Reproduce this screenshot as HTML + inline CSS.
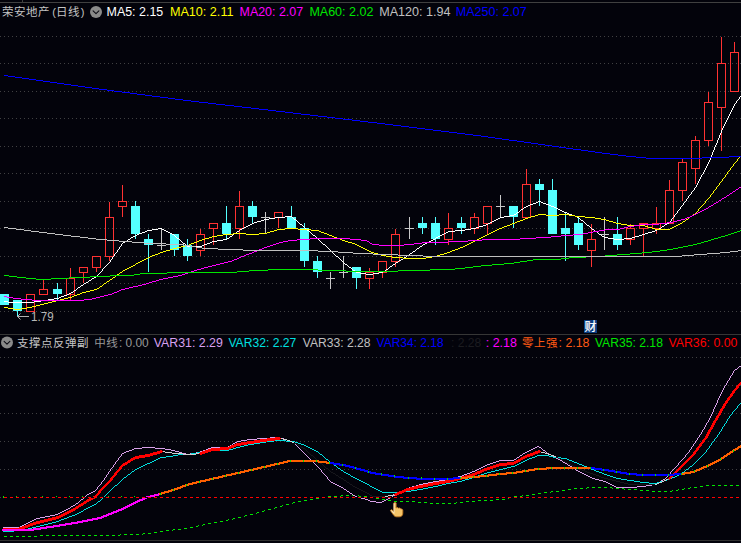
<!DOCTYPE html>
<html lang="zh-CN"><head><meta charset="utf-8"><title>荣安地产(日线)</title>
<style>html,body{margin:0;padding:0;background:#03030b;overflow:hidden}svg{display:block}text{font-family:"Liberation Sans","Noto Sans CJK SC",sans-serif;font-size:12.5px}.cj{font-size:11.5px;letter-spacing:0.5px}</style></head><body>
<svg width="741" height="543" viewBox="0 0 741 543">
<rect x="0" y="0" width="741" height="543" fill="#03030b"/>
<g shape-rendering="crispEdges">
<rect x="0" y="2" width="741" height="1" fill="#404040"/>
<rect x="22" y="0" width="1" height="2" fill="#404040"/>
<rect x="0" y="334" width="741" height="1" fill="#363636"/>
<rect x="0" y="540" width="741" height="1" fill="#303030"/>
<line x1="0" y1="36.5" x2="741" y2="36.5" stroke="#404042" stroke-width="1" stroke-dasharray="1 3"/>
<line x1="0" y1="63.5" x2="741" y2="63.5" stroke="#404042" stroke-width="1" stroke-dasharray="1 3"/>
<line x1="0" y1="91.5" x2="741" y2="91.5" stroke="#404042" stroke-width="1" stroke-dasharray="1 3"/>
<line x1="0" y1="118.5" x2="741" y2="118.5" stroke="#404042" stroke-width="1" stroke-dasharray="1 3"/>
<line x1="0" y1="146.5" x2="741" y2="146.5" stroke="#404042" stroke-width="1" stroke-dasharray="1 3"/>
<line x1="0" y1="173.5" x2="741" y2="173.5" stroke="#404042" stroke-width="1" stroke-dasharray="1 3"/>
<line x1="0" y1="201.5" x2="741" y2="201.5" stroke="#404042" stroke-width="1" stroke-dasharray="1 3"/>
<line x1="0" y1="228.5" x2="741" y2="228.5" stroke="#404042" stroke-width="1" stroke-dasharray="1 3"/>
<line x1="0" y1="256.5" x2="741" y2="256.5" stroke="#404042" stroke-width="1" stroke-dasharray="1 3"/>
<line x1="0" y1="283.5" x2="741" y2="283.5" stroke="#404042" stroke-width="1" stroke-dasharray="1 3"/>
<line x1="0" y1="311.5" x2="741" y2="311.5" stroke="#404042" stroke-width="1" stroke-dasharray="1 3"/>
<line x1="0" y1="357.5" x2="741" y2="357.5" stroke="#404042" stroke-width="1" stroke-dasharray="1 3"/>
<line x1="0" y1="385.5" x2="741" y2="385.5" stroke="#404042" stroke-width="1" stroke-dasharray="1 3"/>
<line x1="0" y1="413.5" x2="741" y2="413.5" stroke="#404042" stroke-width="1" stroke-dasharray="1 3"/>
<line x1="0" y1="441.5" x2="741" y2="441.5" stroke="#404042" stroke-width="1" stroke-dasharray="1 3"/>
<line x1="0" y1="469.5" x2="741" y2="469.5" stroke="#404042" stroke-width="1" stroke-dasharray="1 3"/>
<line x1="0" y1="497.5" x2="741" y2="497.5" stroke="#404042" stroke-width="1" stroke-dasharray="1 3"/>
<rect x="4" y="294" width="1" height="11" fill="#54ffff"/>
<rect x="0" y="294" width="9" height="11" fill="#54ffff"/>
<rect x="17" y="300" width="1" height="16" fill="#54ffff"/>
<rect x="13" y="300" width="9" height="11" fill="#54ffff"/>
<rect x="26.5" y="294.5" width="8" height="17" fill="none" stroke="#ff3232" stroke-width="1"/>
<rect x="43" y="279" width="1" height="10" fill="#ff3232"/>
<rect x="39.5" y="289.5" width="8" height="5" fill="none" stroke="#ff3232" stroke-width="1"/>
<rect x="57" y="283" width="1" height="17" fill="#54ffff"/>
<rect x="53" y="289" width="9" height="5" fill="#54ffff"/>
<rect x="70" y="268" width="1" height="10" fill="#ff3232"/>
<rect x="70" y="295" width="1" height="5" fill="#ff3232"/>
<rect x="66.5" y="278.5" width="8" height="16" fill="none" stroke="#ff3232" stroke-width="1"/>
<rect x="83" y="273" width="1" height="10" fill="#ff3232"/>
<rect x="79.5" y="267.5" width="8" height="5" fill="none" stroke="#ff3232" stroke-width="1"/>
<rect x="96" y="268" width="1" height="4" fill="#ff3232"/>
<rect x="92.5" y="256.5" width="8" height="11" fill="none" stroke="#ff3232" stroke-width="1"/>
<rect x="109" y="202" width="1" height="15" fill="#ff3232"/>
<rect x="109" y="257" width="1" height="4" fill="#ff3232"/>
<rect x="105.5" y="217.5" width="8" height="39" fill="none" stroke="#ff3232" stroke-width="1"/>
<rect x="122" y="185" width="1" height="16" fill="#ff3232"/>
<rect x="122" y="207" width="1" height="10" fill="#ff3232"/>
<rect x="118.5" y="201.5" width="8" height="5" fill="none" stroke="#ff3232" stroke-width="1"/>
<rect x="135" y="201" width="1" height="38" fill="#54ffff"/>
<rect x="131" y="206" width="9" height="28" fill="#54ffff"/>
<rect x="148" y="234" width="1" height="38" fill="#54ffff"/>
<rect x="144" y="239" width="9" height="6" fill="#54ffff"/>
<rect x="161" y="228" width="1" height="22" fill="#c8c8c8"/>
<rect x="157" y="245" width="9" height="1" fill="#c8c8c8"/>
<rect x="174" y="234" width="1" height="22" fill="#54ffff"/>
<rect x="170" y="234" width="9" height="16" fill="#54ffff"/>
<rect x="187" y="239" width="1" height="22" fill="#54ffff"/>
<rect x="183" y="245" width="9" height="11" fill="#54ffff"/>
<rect x="200" y="229" width="1" height="5" fill="#ff3232"/>
<rect x="200" y="251" width="1" height="5" fill="#ff3232"/>
<rect x="196.5" y="234.5" width="8" height="16" fill="none" stroke="#ff3232" stroke-width="1"/>
<rect x="213" y="229" width="1" height="16" fill="#ff3232"/>
<rect x="209.5" y="223.5" width="8" height="5" fill="none" stroke="#ff3232" stroke-width="1"/>
<rect x="226" y="206" width="1" height="33" fill="#54ffff"/>
<rect x="222" y="223" width="9" height="11" fill="#54ffff"/>
<rect x="239" y="191" width="1" height="15" fill="#ff3232"/>
<rect x="239" y="229" width="1" height="10" fill="#ff3232"/>
<rect x="235.5" y="206.5" width="8" height="22" fill="none" stroke="#ff3232" stroke-width="1"/>
<rect x="252" y="201" width="1" height="22" fill="#54ffff"/>
<rect x="248" y="206" width="9" height="11" fill="#54ffff"/>
<rect x="265" y="212" width="1" height="22" fill="#c8c8c8"/>
<rect x="261" y="217" width="9" height="1" fill="#c8c8c8"/>
<rect x="278" y="218" width="1" height="10" fill="#ff3232"/>
<rect x="274.5" y="212.5" width="8" height="5" fill="none" stroke="#ff3232" stroke-width="1"/>
<rect x="291" y="206" width="1" height="22" fill="#54ffff"/>
<rect x="287" y="217" width="9" height="11" fill="#54ffff"/>
<rect x="304" y="223" width="1" height="44" fill="#54ffff"/>
<rect x="300" y="228" width="9" height="33" fill="#54ffff"/>
<rect x="317" y="256" width="1" height="22" fill="#54ffff"/>
<rect x="313" y="261" width="9" height="11" fill="#54ffff"/>
<rect x="330" y="272" width="1" height="17" fill="#c8c8c8"/>
<rect x="326" y="278" width="9" height="1" fill="#c8c8c8"/>
<rect x="343" y="256" width="1" height="22" fill="#c8c8c8"/>
<rect x="339" y="272" width="9" height="1" fill="#c8c8c8"/>
<rect x="356" y="267" width="1" height="22" fill="#54ffff"/>
<rect x="352" y="267" width="9" height="11" fill="#54ffff"/>
<rect x="369" y="268" width="1" height="4" fill="#ff3232"/>
<rect x="369" y="279" width="1" height="10" fill="#ff3232"/>
<rect x="365.5" y="272.5" width="8" height="6" fill="none" stroke="#ff3232" stroke-width="1"/>
<rect x="382" y="273" width="1" height="5" fill="#ff3232"/>
<rect x="378.5" y="261.5" width="8" height="11" fill="none" stroke="#ff3232" stroke-width="1"/>
<rect x="395" y="229" width="1" height="5" fill="#ff3232"/>
<rect x="395" y="262" width="1" height="5" fill="#ff3232"/>
<rect x="391.5" y="234.5" width="8" height="27" fill="none" stroke="#ff3232" stroke-width="1"/>
<rect x="409" y="217" width="1" height="22" fill="#c8c8c8"/>
<rect x="405" y="228" width="9" height="1" fill="#c8c8c8"/>
<rect x="422" y="217" width="1" height="17" fill="#54ffff"/>
<rect x="418" y="223" width="9" height="5" fill="#54ffff"/>
<rect x="435" y="217" width="1" height="28" fill="#54ffff"/>
<rect x="431" y="223" width="9" height="16" fill="#54ffff"/>
<rect x="448" y="213" width="1" height="15" fill="#ff3232"/>
<rect x="448" y="240" width="1" height="5" fill="#ff3232"/>
<rect x="444.5" y="228.5" width="8" height="11" fill="none" stroke="#ff3232" stroke-width="1"/>
<rect x="461" y="217" width="1" height="17" fill="#54ffff"/>
<rect x="457" y="223" width="9" height="5" fill="#54ffff"/>
<rect x="474" y="213" width="1" height="4" fill="#ff3232"/>
<rect x="474" y="229" width="1" height="5" fill="#ff3232"/>
<rect x="470.5" y="217.5" width="8" height="11" fill="none" stroke="#ff3232" stroke-width="1"/>
<rect x="487" y="224" width="1" height="10" fill="#ff3232"/>
<rect x="483.5" y="206.5" width="8" height="17" fill="none" stroke="#ff3232" stroke-width="1"/>
<rect x="500" y="195" width="1" height="22" fill="#c8c8c8"/>
<rect x="496" y="206" width="9" height="1" fill="#c8c8c8"/>
<rect x="513" y="206" width="1" height="22" fill="#54ffff"/>
<rect x="509" y="206" width="9" height="11" fill="#54ffff"/>
<rect x="526" y="169" width="1" height="15" fill="#ff3232"/>
<rect x="522.5" y="184.5" width="8" height="33" fill="none" stroke="#ff3232" stroke-width="1"/>
<rect x="539" y="179" width="1" height="27" fill="#54ffff"/>
<rect x="535" y="184" width="9" height="6" fill="#54ffff"/>
<rect x="552" y="179" width="1" height="55" fill="#54ffff"/>
<rect x="548" y="190" width="9" height="44" fill="#54ffff"/>
<rect x="565" y="212" width="1" height="49" fill="#54ffff"/>
<rect x="561" y="228" width="9" height="6" fill="#54ffff"/>
<rect x="578" y="217" width="1" height="33" fill="#54ffff"/>
<rect x="574" y="223" width="9" height="22" fill="#54ffff"/>
<rect x="591" y="224" width="1" height="15" fill="#ff3232"/>
<rect x="591" y="251" width="1" height="16" fill="#ff3232"/>
<rect x="587.5" y="239.5" width="8" height="11" fill="none" stroke="#ff3232" stroke-width="1"/>
<rect x="604" y="217" width="1" height="33" fill="#c8c8c8"/>
<rect x="600" y="234" width="9" height="1" fill="#c8c8c8"/>
<rect x="617" y="217" width="1" height="33" fill="#54ffff"/>
<rect x="613" y="234" width="9" height="11" fill="#54ffff"/>
<rect x="630" y="224" width="1" height="4" fill="#ff3232"/>
<rect x="630" y="240" width="1" height="5" fill="#ff3232"/>
<rect x="626.5" y="228.5" width="8" height="11" fill="none" stroke="#ff3232" stroke-width="1"/>
<rect x="643" y="229" width="1" height="27" fill="#ff3232"/>
<rect x="639.5" y="223.5" width="8" height="5" fill="none" stroke="#ff3232" stroke-width="1"/>
<rect x="656" y="207" width="1" height="16" fill="#ff3232"/>
<rect x="656" y="229" width="1" height="5" fill="#ff3232"/>
<rect x="652.5" y="223.5" width="8" height="5" fill="none" stroke="#ff3232" stroke-width="1"/>
<rect x="669" y="180" width="1" height="10" fill="#ff3232"/>
<rect x="665.5" y="190.5" width="8" height="33" fill="none" stroke="#ff3232" stroke-width="1"/>
<rect x="682" y="158" width="1" height="4" fill="#ff3232"/>
<rect x="682" y="191" width="1" height="10" fill="#ff3232"/>
<rect x="678.5" y="162.5" width="8" height="28" fill="none" stroke="#ff3232" stroke-width="1"/>
<rect x="695" y="136" width="1" height="4" fill="#ff3232"/>
<rect x="695" y="169" width="1" height="15" fill="#ff3232"/>
<rect x="691.5" y="140.5" width="8" height="28" fill="none" stroke="#ff3232" stroke-width="1"/>
<rect x="708" y="92" width="1" height="10" fill="#ff3232"/>
<rect x="708" y="141" width="1" height="5" fill="#ff3232"/>
<rect x="704.5" y="102.5" width="8" height="38" fill="none" stroke="#ff3232" stroke-width="1"/>
<rect x="721" y="37" width="1" height="26" fill="#ff3232"/>
<rect x="721" y="108" width="1" height="43" fill="#ff3232"/>
<rect x="717.5" y="63.5" width="8" height="44" fill="none" stroke="#ff3232" stroke-width="1"/>
<rect x="734" y="42" width="1" height="10" fill="#ff3232"/>
<rect x="730.5" y="52.5" width="8" height="39" fill="none" stroke="#ff3232" stroke-width="1"/>
<path d="M4 301h4v1h-4zM8 302h26v1h-26zM34 301h7v1h-7zM41 300h7v1h-7zM48 299h6v1h-6zM54 298h5v1h-5zM59 297h2v1h-2zM61 296h3v1h-3zM64 295h3v1h-3zM67 294h2v1h-2zM69 293h2v1h-2zM71 292h2v1h-2zM73 291h1v1h-1zM74 290h2v1h-2zM76 289h1v1h-1zM77 288h1v1h-1zM78 287h2v1h-2zM80 286h1v1h-1zM81 285h2v1h-2zM83 284h1v1h-1zM84 283h2v1h-2zM86 282h2v1h-2zM88 281h1v1h-1zM89 280h2v1h-2zM91 279h1v1h-1zM92 278h2v1h-2zM94 277h2v1h-2zM96 276h1v1h-1zM97 275h1v1h-1zM98 274h1v1h-1zM99 273h1v1h-1zM100 272h1v1h-1zM101 271h1v1h-1zM102 269h1v2h-1zM103 268h1v1h-1zM104 267h1v1h-1zM105 266h1v1h-1zM106 265h1v1h-1zM107 264h1v1h-1zM108 263h1v1h-1zM109 262h1v1h-1zM110 260h1v2h-1zM111 259h1v1h-1zM112 257h1v2h-1zM113 256h1v1h-1zM114 254h1v2h-1zM115 253h1v1h-1zM116 252h1v1h-1zM117 250h1v2h-1zM118 249h1v1h-1zM119 247h1v2h-1zM120 246h1v1h-1zM121 244h1v2h-1zM122 243h1v1h-1zM123 242h2v1h-2zM125 241h2v1h-2zM127 240h1v1h-1zM128 239h2v1h-2zM130 238h1v1h-1zM131 237h2v1h-2zM133 236h2v1h-2zM135 235h2v1h-2zM137 234h2v1h-2zM139 233h3v1h-3zM142 232h3v1h-3zM145 231h2v1h-2zM147 230h5v1h-5zM152 229h6v1h-6zM158 228h4v1h-4zM162 229h2v1h-2zM164 230h2v1h-2zM166 231h2v1h-2zM168 232h2v1h-2zM170 233h2v1h-2zM172 234h2v1h-2zM174 235h1v1h-1zM175 236h1v1h-1zM176 237h1v1h-1zM177 238h2v1h-2zM179 239h1v1h-1zM180 240h1v1h-1zM181 241h1v1h-1zM182 242h1v1h-1zM183 243h2v1h-2zM185 244h1v1h-1zM186 245h1v1h-1zM187 246h15v1h-15zM202 245h2v1h-2zM204 244h3v1h-3zM207 243h3v1h-3zM210 242h2v1h-2zM212 241h5v1h-5zM217 240h6v1h-6zM223 239h4v1h-4zM227 238h2v1h-2zM229 237h1v1h-1zM230 236h2v1h-2zM232 235h1v1h-1zM233 234h1v1h-1zM234 233h2v1h-2zM236 232h1v1h-1zM237 231h2v1h-2zM239 230h1v1h-1zM240 229h2v1h-2zM242 228h2v1h-2zM244 227h2v1h-2zM246 226h2v1h-2zM248 225h2v1h-2zM250 224h2v1h-2zM252 223h2v1h-2zM254 222h3v1h-3zM257 221h4v1h-4zM261 220h3v1h-3zM264 219h5v1h-5zM269 218h6v1h-6zM275 217h10v1h-10zM285 216h7v1h-7zM292 217h1v1h-1zM293 218h1v1h-1zM294 219h2v1h-2zM296 220h1v1h-1zM297 221h1v1h-1zM298 222h1v1h-1zM299 223h1v1h-1zM300 224h2v1h-2zM302 225h1v1h-1zM303 226h1v1h-1zM304 227h1v1h-1zM305 228h1v1h-1zM306 229h1v1h-1zM307 230h2v1h-2zM309 231h1v1h-1zM310 232h1v1h-1zM311 233h1v1h-1zM312 234h1v1h-1zM313 235h2v1h-2zM315 236h1v1h-1zM316 237h1v1h-1zM317 238h1v1h-1zM318 239h1v1h-1zM319 240h1v1h-1zM320 241h1v1h-1zM321 242h1v1h-1zM322 243h1v1h-1zM323 244h2v1h-2zM325 245h1v1h-1zM326 246h1v1h-1zM327 247h1v1h-1zM328 248h1v1h-1zM329 249h1v1h-1zM330 250h1v1h-1zM331 251h1v1h-1zM332 252h1v1h-1zM333 253h1v1h-1zM334 254h1v1h-1zM335 255h1v1h-1zM336 256h2v1h-2zM338 257h1v1h-1zM339 258h1v1h-1zM340 259h1v1h-1zM341 260h1v1h-1zM342 261h1v1h-1zM343 262h1v1h-1zM344 263h1v1h-1zM345 264h2v1h-2zM347 265h1v1h-1zM348 266h1v1h-1zM349 267h2v1h-2zM351 268h1v1h-1zM352 269h1v1h-1zM353 270h2v1h-2zM355 271h1v1h-1zM356 272h4v1h-4zM360 273h6v1h-6zM366 274h7v1h-7zM373 273h6v1h-6zM379 272h4v1h-4zM383 271h2v1h-2zM385 270h1v1h-1zM386 269h2v1h-2zM388 268h1v1h-1zM389 267h1v1h-1zM390 266h2v1h-2zM392 265h1v1h-1zM393 264h2v1h-2zM395 263h1v1h-1zM396 262h2v1h-2zM398 261h1v1h-1zM399 260h2v1h-2zM401 259h2v1h-2zM403 258h1v1h-1zM404 257h2v1h-2zM406 256h1v1h-1zM407 255h2v1h-2zM409 254h1v1h-1zM410 253h2v1h-2zM412 252h1v1h-1zM413 251h2v1h-2zM415 250h1v1h-1zM416 249h1v1h-1zM417 248h2v1h-2zM419 247h1v1h-1zM420 246h2v1h-2zM422 245h1v1h-1zM423 244h2v1h-2zM425 243h2v1h-2zM427 242h2v1h-2zM429 241h2v1h-2zM431 240h2v1h-2zM433 239h2v1h-2zM435 238h1v1h-1zM436 237h2v1h-2zM438 236h2v1h-2zM440 235h2v1h-2zM442 234h2v1h-2zM444 233h2v1h-2zM446 232h2v1h-2zM448 231h7v1h-7zM455 230h10v1h-10zM465 229h6v1h-6zM471 228h5v1h-5zM476 227h3v1h-3zM479 226h4v1h-4zM483 225h3v1h-3zM486 224h2v1h-2zM488 223h2v1h-2zM490 222h2v1h-2zM492 221h2v1h-2zM494 220h2v1h-2zM496 219h2v1h-2zM498 218h2v1h-2zM500 217h4v1h-4zM504 216h6v1h-6zM510 215h4v1h-4zM514 214h2v1h-2zM516 213h1v1h-1zM517 212h2v1h-2zM519 211h1v1h-1zM520 210h1v1h-1zM521 209h2v1h-2zM523 208h1v1h-1zM524 207h2v1h-2zM526 206h2v1h-2zM528 205h2v1h-2zM530 204h3v1h-3zM533 203h3v1h-3zM536 202h2v1h-2zM538 201h3v1h-3zM541 202h2v1h-2zM543 203h3v1h-3zM546 204h3v1h-3zM549 205h2v1h-2zM551 206h3v1h-3zM554 207h2v1h-2zM556 208h2v1h-2zM558 209h2v1h-2zM560 210h2v1h-2zM562 211h2v1h-2zM564 212h3v1h-3zM567 213h2v1h-2zM569 214h3v1h-3zM572 215h3v1h-3zM575 216h2v1h-2zM577 217h2v1h-2zM579 218h1v1h-1zM580 219h1v1h-1zM581 220h2v1h-2zM583 221h1v1h-1zM584 222h1v1h-1zM585 223h1v1h-1zM586 224h1v1h-1zM587 225h2v1h-2zM589 226h1v1h-1zM590 227h1v1h-1zM591 228h1v1h-1zM592 229h2v1h-2zM594 230h1v1h-1zM595 231h2v1h-2zM597 232h1v1h-1zM598 233h1v1h-1zM599 234h2v1h-2zM601 235h1v1h-1zM602 236h2v1h-2zM604 237h4v1h-4zM608 238h6v1h-6zM614 239h10v1h-10zM624 238h8v1h-8zM632 237h3v1h-3zM635 236h4v1h-4zM639 235h3v1h-3zM642 234h3v1h-3zM645 233h3v1h-3zM648 232h4v1h-4zM652 231h3v1h-3zM655 230h2v1h-2zM657 229h2v1h-2zM659 228h2v1h-2zM661 227h1v1h-1zM662 226h2v1h-2zM664 225h1v1h-1zM665 224h2v1h-2zM667 223h2v1h-2zM669 222h1v1h-1zM670 221h1v1h-1zM671 219h1v2h-1zM672 218h1v1h-1zM673 217h1v1h-1zM674 215h1v2h-1zM675 214h1v1h-1zM676 213h1v1h-1zM677 211h1v2h-1zM678 210h1v1h-1zM679 209h1v1h-1zM680 207h1v2h-1zM681 206h1v1h-1zM682 205h1v1h-1zM683 203h1v2h-1zM684 202h1v1h-1zM685 201h1v1h-1zM686 199h1v2h-1zM687 198h1v1h-1zM688 196h1v2h-1zM689 195h1v1h-1zM690 194h1v1h-1zM691 192h1v2h-1zM692 191h1v1h-1zM693 190h1v1h-1zM694 188h1v2h-1zM695 187h1v1h-1zM696 185h1v2h-1zM697 183h1v2h-1zM698 181h1v2h-1zM699 179h1v2h-1zM700 177h1v2h-1zM701 175h1v2h-1zM702 174h1v1h-1zM703 172h1v2h-1zM704 170h1v2h-1zM705 168h1v2h-1zM706 166h1v2h-1zM707 164h1v2h-1zM708 162h1v2h-1zM709 160h1v2h-1zM710 157h1v3h-1zM711 155h1v2h-1zM712 152h1v3h-1zM713 150h1v2h-1zM714 147h1v3h-1zM715 145h1v2h-1zM716 143h1v2h-1zM717 140h1v3h-1zM718 138h1v2h-1zM719 135h1v3h-1zM720 133h1v2h-1zM721 130h1v3h-1zM722 128h1v2h-1zM723 126h1v2h-1zM724 124h1v2h-1zM725 122h1v2h-1zM726 120h1v2h-1zM727 118h1v2h-1zM728 116h1v2h-1zM729 114h1v2h-1zM730 112h1v2h-1zM731 110h1v2h-1zM732 108h1v2h-1zM733 106h1v2h-1zM734 104h1v2h-1zM735 103h1v1h-1zM736 101h1v2h-1zM737 100h1v1h-1zM738 99h1v1h-1zM739 97h1v2h-1zM740 96h1v1h-1z" fill="#ffffff"/>
<path d="M4 307h4v1h-4zM8 308h6v1h-6zM14 309h7v1h-7zM21 308h6v1h-6zM27 307h5v1h-5zM32 306h4v1h-4zM36 305h4v1h-4zM40 304h4v1h-4zM44 303h4v1h-4zM48 302h4v1h-4zM52 301h4v1h-4zM56 300h4v1h-4zM60 299h4v1h-4zM64 298h4v1h-4zM68 297h4v1h-4zM72 296h2v1h-2zM74 295h3v1h-3zM77 294h3v1h-3zM80 293h2v1h-2zM82 292h4v1h-4zM86 291h4v1h-4zM90 290h4v1h-4zM94 289h3v1h-3zM97 288h2v1h-2zM99 287h1v1h-1zM100 286h2v1h-2zM102 285h1v1h-1zM103 284h1v1h-1zM104 283h2v1h-2zM106 282h1v1h-1zM107 281h2v1h-2zM109 280h1v1h-1zM110 279h2v1h-2zM112 278h1v1h-1zM113 277h2v1h-2zM115 276h1v1h-1zM116 275h1v1h-1zM117 274h2v1h-2zM119 273h1v1h-1zM120 272h2v1h-2zM122 271h1v1h-1zM123 270h2v1h-2zM125 269h2v1h-2zM127 268h2v1h-2zM129 267h2v1h-2zM131 266h2v1h-2zM133 265h2v1h-2zM135 264h1v1h-1zM136 263h2v1h-2zM138 262h2v1h-2zM140 261h2v1h-2zM142 260h2v1h-2zM144 259h2v1h-2zM146 258h2v1h-2zM148 257h2v1h-2zM150 256h2v1h-2zM152 255h3v1h-3zM155 254h3v1h-3zM158 253h2v1h-2zM160 252h3v1h-3zM163 251h3v1h-3zM166 250h4v1h-4zM170 249h3v1h-3zM173 248h4v1h-4zM177 247h4v1h-4zM181 246h4v1h-4zM185 245h4v1h-4zM189 244h2v1h-2zM191 243h3v1h-3zM194 242h3v1h-3zM197 241h2v1h-2zM199 240h3v1h-3zM202 239h3v1h-3zM205 238h4v1h-4zM209 237h3v1h-3zM212 236h5v1h-5zM217 235h6v1h-6zM223 234h10v1h-10zM233 233h13v1h-13zM246 234h13v1h-13zM259 233h8v1h-8zM267 232h3v1h-3zM270 231h4v1h-4zM274 230h3v1h-3zM277 229h8v1h-8zM285 228h13v1h-13zM298 229h13v1h-13zM311 230h8v1h-8zM319 231h2v1h-2zM321 232h3v1h-3zM324 233h3v1h-3zM327 234h2v1h-2zM329 235h3v1h-3zM332 236h2v1h-2zM334 237h3v1h-3zM337 238h3v1h-3zM340 239h2v1h-2zM342 240h3v1h-3zM345 241h3v1h-3zM348 242h4v1h-4zM352 243h3v1h-3zM355 244h2v1h-2zM357 245h2v1h-2zM359 246h2v1h-2zM361 247h2v1h-2zM363 248h2v1h-2zM365 249h2v1h-2zM367 250h2v1h-2zM369 251h2v1h-2zM371 252h3v1h-3zM374 253h4v1h-4zM378 254h3v1h-3zM381 255h5v1h-5zM386 256h6v1h-6zM392 257h11v1h-11zM403 258h23v1h-23zM426 257h6v1h-6zM432 256h5v1h-5zM437 255h3v1h-3zM440 254h4v1h-4zM444 253h3v1h-3zM447 252h3v1h-3zM450 251h2v1h-2zM452 250h3v1h-3zM455 249h3v1h-3zM458 248h2v1h-2zM460 247h3v1h-3zM463 246h2v1h-2zM465 245h2v1h-2zM467 244h2v1h-2zM469 243h2v1h-2zM471 242h2v1h-2zM473 241h2v1h-2zM475 240h2v1h-2zM477 239h2v1h-2zM479 238h2v1h-2zM481 237h2v1h-2zM483 236h2v1h-2zM485 235h2v1h-2zM487 234h2v1h-2zM489 233h2v1h-2zM491 232h2v1h-2zM493 231h2v1h-2zM495 230h2v1h-2zM497 229h2v1h-2zM499 228h3v1h-3zM502 227h2v1h-2zM504 226h3v1h-3zM507 225h3v1h-3zM510 224h2v1h-2zM512 223h3v1h-3zM515 222h2v1h-2zM517 221h3v1h-3zM520 220h3v1h-3zM523 219h2v1h-2zM525 218h3v1h-3zM528 217h3v1h-3zM531 216h4v1h-4zM535 215h3v1h-3zM538 214h8v1h-8zM546 215h13v1h-13zM559 214h10v1h-10zM569 215h6v1h-6zM575 216h10v1h-10zM585 217h10v1h-10zM595 218h6v1h-6zM601 219h5v1h-5zM606 220h3v1h-3zM609 221h4v1h-4zM613 222h3v1h-3zM616 223h5v1h-5zM621 224h6v1h-6zM627 225h18v1h-18zM645 226h3v1h-3zM648 227h4v1h-4zM652 228h3v1h-3zM655 229h15v1h-15zM670 228h2v1h-2zM672 227h2v1h-2zM674 226h2v1h-2zM676 225h2v1h-2zM678 224h2v1h-2zM680 223h2v1h-2zM682 222h1v1h-1zM683 221h2v1h-2zM685 220h1v1h-1zM686 219h2v1h-2zM688 218h1v1h-1zM689 217h1v1h-1zM690 216h2v1h-2zM692 215h1v1h-1zM693 214h2v1h-2zM695 213h1v1h-1zM696 212h1v1h-1zM697 211h1v1h-1zM698 209h1v2h-1zM699 208h1v1h-1zM700 207h1v1h-1zM701 206h1v1h-1zM702 205h1v1h-1zM703 204h1v1h-1zM704 203h1v1h-1zM705 201h1v2h-1zM706 200h1v1h-1zM707 199h1v1h-1zM708 198h1v1h-1zM709 197h1v1h-1zM710 195h1v2h-1zM711 194h1v1h-1zM712 193h1v1h-1zM713 191h1v2h-1zM714 190h1v1h-1zM715 189h1v1h-1zM716 187h1v2h-1zM717 186h1v1h-1zM718 185h1v1h-1zM719 183h1v2h-1zM720 182h1v1h-1zM721 181h1v1h-1zM722 179h1v2h-1zM723 178h1v1h-1zM724 177h1v1h-1zM725 175h1v2h-1zM726 174h1v1h-1zM727 172h1v2h-1zM728 171h1v1h-1zM729 170h1v1h-1zM730 168h1v2h-1zM731 167h1v1h-1zM732 166h1v1h-1zM733 164h1v2h-1zM734 163h1v1h-1zM735 162h1v1h-1zM736 161h1v1h-1zM737 159h1v2h-1zM738 158h1v1h-1zM739 157h1v1h-1zM740 156h1v1h-1z" fill="#ffff00"/>
<path d="M4 296h3v1h-3zM7 297h6v1h-6zM13 298h8v1h-8zM21 299h11v1h-11zM32 300h52v1h-52zM84 299h8v1h-8zM92 298h4v1h-4zM96 297h4v1h-4zM100 296h4v1h-4zM104 295h4v1h-4zM108 294h4v1h-4zM112 293h2v1h-2zM114 292h3v1h-3zM117 291h2v1h-2zM119 290h2v1h-2zM121 289h4v1h-4zM125 288h4v1h-4zM129 287h4v1h-4zM133 286h5v1h-5zM138 285h4v1h-4zM142 284h4v1h-4zM146 283h3v1h-3zM149 282h3v1h-3zM152 281h4v1h-4zM156 280h3v1h-3zM159 279h4v1h-4zM163 278h5v1h-5zM168 277h5v1h-5zM173 276h5v1h-5zM178 275h4v1h-4zM182 274h3v1h-3zM185 273h3v1h-3zM188 272h3v1h-3zM191 271h3v1h-3zM194 270h3v1h-3zM197 269h4v1h-4zM201 268h3v1h-3zM204 267h4v1h-4zM208 266h4v1h-4zM212 265h4v1h-4zM216 264h4v1h-4zM220 263h4v1h-4zM224 262h4v1h-4zM228 261h4v1h-4zM232 260h2v1h-2zM234 259h3v1h-3zM237 258h2v1h-2zM239 257h2v1h-2zM241 256h3v1h-3zM244 255h2v1h-2zM246 254h3v1h-3zM249 253h3v1h-3zM252 252h2v1h-2zM254 251h3v1h-3zM257 250h2v1h-2zM259 249h3v1h-3zM262 248h2v1h-2zM264 247h3v1h-3zM267 246h3v1h-3zM270 245h3v1h-3zM273 244h3v1h-3zM276 243h3v1h-3zM279 242h4v1h-4zM283 241h5v1h-5zM288 240h9v1h-9zM297 239h13v1h-13zM310 238h40v1h-40zM350 239h11v1h-11zM361 240h6v1h-6zM367 241h2v1h-2zM369 242h1v1h-1zM370 243h2v1h-2zM372 244h7v1h-7zM379 245h25v1h-25zM404 244h10v1h-10zM414 243h8v1h-8zM422 242h26v1h-26zM448 241h20v1h-20zM468 240h14v1h-14zM482 239h38v1h-38zM520 238h16v1h-16zM536 237h15v1h-15zM551 236h10v1h-10zM561 235h12v1h-12zM573 234h10v1h-10zM583 233h5v1h-5zM588 232h5v1h-5zM593 231h6v1h-6zM599 230h6v1h-6zM605 229h15v1h-15zM620 228h4v1h-4zM624 227h4v1h-4zM628 226h6v1h-6zM634 225h6v1h-6zM640 224h19v1h-19zM659 223h8v1h-8zM667 222h6v1h-6zM673 221h4v1h-4zM677 220h4v1h-4zM681 219h4v1h-4zM685 218h2v1h-2zM687 217h3v1h-3zM690 216h2v1h-2zM692 215h2v1h-2zM694 214h2v1h-2zM696 213h2v1h-2zM698 212h2v1h-2zM700 211h2v1h-2zM702 210h2v1h-2zM704 209h2v1h-2zM706 208h2v1h-2zM708 207h1v1h-1zM709 206h2v1h-2zM711 205h2v1h-2zM713 204h1v1h-1zM714 203h2v1h-2zM716 202h2v1h-2zM718 201h1v1h-1zM719 200h2v1h-2zM721 199h1v1h-1zM722 198h2v1h-2zM724 197h2v1h-2zM726 196h1v1h-1zM727 195h2v1h-2zM729 194h1v1h-1zM730 193h2v1h-2zM732 192h1v1h-1zM733 191h2v1h-2zM735 190h1v1h-1zM736 189h2v1h-2zM738 188h1v1h-1zM739 187h2v1h-2z" fill="#ff00ff"/>
<path d="M4 275h5v1h-5zM9 276h8v1h-8zM17 277h9v1h-9zM26 278h10v1h-10zM36 279h15v1h-15zM51 278h18v1h-18zM69 277h21v1h-21zM90 276h20v1h-20zM110 275h24v1h-24zM134 274h6v1h-6zM140 273h27v1h-27zM167 272h70v1h-70zM237 271h12v1h-12zM249 270h19v1h-19zM268 269h50v1h-50zM318 270h28v1h-28zM346 271h52v1h-52zM398 270h32v1h-32zM430 269h25v1h-25zM455 268h10v1h-10zM465 267h8v1h-8zM473 266h8v1h-8zM481 265h11v1h-11zM492 264h12v1h-12zM504 263h10v1h-10zM514 262h6v1h-6zM520 261h7v1h-7zM527 260h6v1h-6zM533 259h28v1h-28zM561 258h8v1h-8zM569 257h17v1h-17zM586 256h19v1h-19zM605 255h12v1h-12zM617 254h13v1h-13zM630 253h12v1h-12zM642 252h10v1h-10zM652 251h8v1h-8zM660 250h7v1h-7zM667 249h6v1h-6zM673 248h5v1h-5zM678 247h5v1h-5zM683 246h5v1h-5zM688 245h5v1h-5zM693 244h4v1h-4zM697 243h4v1h-4zM701 242h3v1h-3zM704 241h4v1h-4zM708 240h3v1h-3zM711 239h3v1h-3zM714 238h4v1h-4zM718 237h3v1h-3zM721 236h4v1h-4zM725 235h3v1h-3zM728 234h3v1h-3zM731 233h3v1h-3zM734 232h3v1h-3zM737 231h3v1h-3zM740 230h1v1h-1z" fill="#00e600"/>
<path d="M4 227h4v1h-4zM8 228h8v1h-8zM16 229h8v1h-8zM24 230h7v1h-7zM31 231h8v1h-8zM39 232h8v1h-8zM47 233h8v1h-8zM55 234h8v1h-8zM63 235h8v1h-8zM71 236h9v1h-9zM80 237h8v1h-8zM88 238h8v1h-8zM96 239h11v1h-11zM107 240h12v1h-12zM119 241h13v1h-13zM132 242h12v1h-12zM144 243h22v1h-22zM166 244h18v1h-18zM184 245h6v1h-6zM190 246h6v1h-6zM196 247h6v1h-6zM202 248h16v1h-16zM218 249h25v1h-25zM243 250h75v1h-75zM318 251h20v1h-20zM338 252h15v1h-15zM353 253h20v1h-20zM373 254h25v1h-25zM398 255h25v1h-25zM423 256h259v1h-259zM682 255h12v1h-12zM694 254h13v1h-13zM707 253h13v1h-13zM720 252h10v1h-10zM730 251h8v1h-8zM738 250h3v1h-3z" fill="#c0c0c0"/>
<path d="M4 75h4v1h-4zM8 76h7v1h-7zM15 77h7v1h-7zM22 78h7v1h-7zM29 79h7v1h-7zM36 80h7v1h-7zM43 81h7v1h-7zM50 82h7v1h-7zM57 83h7v1h-7zM64 84h7v1h-7zM71 85h7v1h-7zM78 86h7v1h-7zM85 87h7v1h-7zM92 88h7v1h-7zM99 89h8v1h-8zM107 90h7v1h-7zM114 91h8v1h-8zM122 92h8v1h-8zM130 93h7v1h-7zM137 94h8v1h-8zM145 95h7v1h-7zM152 96h8v1h-8zM160 97h8v1h-8zM168 98h7v1h-7zM175 99h8v1h-8zM183 100h8v1h-8zM191 101h8v1h-8zM199 102h9v1h-9zM208 103h8v1h-8zM216 104h9v1h-9zM225 105h9v1h-9zM234 106h8v1h-8zM242 107h9v1h-9zM251 108h8v1h-8zM259 109h9v1h-9zM268 110h8v1h-8zM276 111h9v1h-9zM285 112h8v1h-8zM293 113h8v1h-8zM301 114h9v1h-9zM310 115h8v1h-8zM318 116h9v1h-9zM327 117h8v1h-8zM335 118h8v1h-8zM343 119h9v1h-9zM352 120h8v1h-8zM360 121h8v1h-8zM368 122h9v1h-9zM377 123h8v1h-8zM385 124h8v1h-8zM393 125h8v1h-8zM401 126h8v1h-8zM409 127h8v1h-8zM417 128h8v1h-8zM425 129h8v1h-8zM433 130h8v1h-8zM441 131h8v1h-8zM449 132h8v1h-8zM457 133h8v1h-8zM465 134h8v1h-8zM473 135h8v1h-8zM481 136h7v1h-7zM488 137h7v1h-7zM495 138h7v1h-7zM502 139h7v1h-7zM509 140h8v1h-8zM517 141h7v1h-7zM524 142h7v1h-7zM531 143h7v1h-7zM538 144h7v1h-7zM545 145h7v1h-7zM552 146h7v1h-7zM559 147h7v1h-7zM566 148h7v1h-7zM573 149h8v1h-8zM581 150h7v1h-7zM588 151h7v1h-7zM595 152h7v1h-7zM602 153h8v1h-8zM610 154h8v1h-8zM618 155h8v1h-8zM626 156h10v1h-10zM636 157h10v1h-10zM646 158h56v1h-56zM702 157h27v1h-27zM729 156h12v1h-12z" fill="#0000ff"/>
<rect x="3" y="496" width="1" height="2" fill="#00e600"/>
<rect x="16" y="496" width="1" height="1" fill="#00e600"/>
<rect x="29" y="496" width="1" height="1" fill="#00e600"/>
<rect x="42" y="496" width="1" height="1" fill="#00e600"/>
<rect x="56" y="496" width="1" height="1" fill="#00e600"/>
<rect x="69" y="496" width="1" height="1" fill="#00e600"/>
<rect x="82" y="496" width="1" height="1" fill="#00e600"/>
<rect x="95" y="496" width="1" height="1" fill="#00e600"/>
<rect x="108" y="496" width="1" height="1" fill="#00e600"/>
<rect x="121" y="496" width="1" height="1" fill="#00e600"/>
<rect x="134" y="496" width="1" height="1" fill="#00e600"/>
<rect x="147" y="496" width="1" height="1" fill="#00e600"/>
<path d="M4 536h3v1h-3zM10 536h3v1h-3zM16 536h3v1h-3zM22 536h3v1h-3zM28 536h3v1h-3zM34 536h3v1h-3zM40 535h3v1h-3zM46 535h3v1h-3zM52 535h3v1h-3zM58 535h3v1h-3zM64 535h3v1h-3zM70 535h3v1h-3zM76 535h3v1h-3zM82 535h3v1h-3zM88 535h3v1h-3zM94 535h3v1h-3zM100 535h3v1h-3zM106 535h3v1h-3zM112 535h3v1h-3zM118 535h2v1h-2zM120 534h1v1h-1zM124 534h3v1h-3zM130 534h3v1h-3zM136 534h3v1h-3zM142 534h1v1h-1zM143 533h2v1h-2zM148 533h3v1h-3zM154 532h3v1h-3zM160 531h3v1h-3zM166 530h3v1h-3zM172 530h1v1h-1zM173 529h2v1h-2zM178 529h3v1h-3zM184 528h3v1h-3zM190 527h3v1h-3zM196 526h2v1h-2zM198 525h1v1h-1zM202 525h1v1h-1zM203 524h2v1h-2zM208 523h3v1h-3zM214 522h3v1h-3zM220 521h3v1h-3zM226 520h2v1h-2zM228 519h1v1h-1zM232 519h1v1h-1zM233 518h2v1h-2zM238 517h3v1h-3zM244 516h1v1h-1zM245 515h2v1h-2zM250 514h3v1h-3zM256 513h1v1h-1zM257 512h2v1h-2zM262 511h2v1h-2zM264 510h1v1h-1zM268 509h3v1h-3zM274 508h1v1h-1zM275 507h2v1h-2zM280 506h2v1h-2zM282 505h1v1h-1zM286 504h3v1h-3zM292 503h1v1h-1zM293 502h2v1h-2zM298 501h3v1h-3zM304 500h3v1h-3zM310 499h3v1h-3zM316 498h3v1h-3zM322 497h3v1h-3zM328 496h3v1h-3zM334 496h3v1h-3zM340 496h1v1h-1zM341 495h2v1h-2zM346 495h3v1h-3zM352 495h3v1h-3zM358 495h1v1h-1zM359 496h2v1h-2zM364 496h3v1h-3zM370 497h3v1h-3zM376 498h3v1h-3zM382 499h3v1h-3zM388 500h3v1h-3zM394 501h3v1h-3zM400 501h3v1h-3zM406 501h3v1h-3zM412 501h3v1h-3zM418 502h3v1h-3zM424 502h3v1h-3zM430 503h3v1h-3zM436 503h3v1h-3zM442 503h3v1h-3zM448 503h3v1h-3zM454 503h2v1h-2zM456 502h1v1h-1zM460 502h3v1h-3zM466 501h3v1h-3zM472 501h3v1h-3zM478 500h3v1h-3zM484 500h3v1h-3zM490 500h3v1h-3zM496 499h3v1h-3zM502 499h3v1h-3zM508 498h1v1h-1zM509 497h2v1h-2zM514 496h3v1h-3zM520 496h2v1h-2zM522 495h1v1h-1zM526 495h3v1h-3zM532 494h3v1h-3zM538 493h3v1h-3zM544 492h3v1h-3zM550 492h1v1h-1zM551 491h2v1h-2zM556 491h3v1h-3zM562 490h3v1h-3zM568 489h3v1h-3zM574 488h3v1h-3zM580 488h3v1h-3zM586 488h1v1h-1zM587 487h2v1h-2zM592 487h3v1h-3zM598 487h3v1h-3zM604 487h3v1h-3zM610 487h2v1h-2zM612 488h1v1h-1zM616 488h3v1h-3zM622 488h2v1h-2zM624 489h1v1h-1zM628 489h3v1h-3zM634 489h3v1h-3zM640 490h3v1h-3zM646 490h3v1h-3zM652 491h3v1h-3zM658 491h3v1h-3zM664 491h3v1h-3zM670 491h2v1h-2zM672 490h1v1h-1zM676 490h2v1h-2zM678 489h1v1h-1zM682 489h2v1h-2zM684 488h1v1h-1zM688 488h2v1h-2zM690 487h1v1h-1zM694 487h3v1h-3zM700 486h3v1h-3zM706 485h3v1h-3zM712 485h3v1h-3zM718 485h3v1h-3zM724 485h3v1h-3zM730 485h3v1h-3zM736 485h3v1h-3z" fill="#00e600"/>
<path d="M3 527h17v1h-17zM20 526h2v1h-2zM22 525h2v1h-2zM24 524h2v1h-2zM26 523h2v1h-2zM28 522h2v1h-2zM30 521h2v1h-2zM32 520h2v1h-2zM34 519h2v1h-2zM36 518h4v1h-4zM40 517h5v1h-5zM45 516h5v1h-5zM50 515h5v1h-5zM55 514h3v1h-3zM58 513h2v1h-2zM60 512h2v1h-2zM62 511h2v1h-2zM64 510h2v1h-2zM66 509h2v1h-2zM68 508h2v1h-2zM70 507h1v1h-1zM71 506h2v1h-2zM73 505h2v1h-2zM75 504h1v1h-1zM76 503h2v1h-2zM78 502h1v1h-1zM79 501h1v1h-1zM80 500h1v1h-1zM81 499h2v1h-2zM83 498h1v1h-1zM84 497h1v1h-1zM85 496h1v1h-1zM86 495h1v1h-1zM87 494h2v1h-2zM89 493h2v1h-2zM91 492h2v1h-2zM93 491h2v1h-2zM95 490h1v1h-1zM96 489h1v1h-1zM97 487h1v2h-1zM98 486h1v1h-1zM99 485h1v1h-1zM100 484h1v1h-1zM101 482h1v2h-1zM102 481h1v1h-1zM103 480h1v1h-1zM104 478h1v2h-1zM105 477h1v1h-1zM106 475h1v2h-1zM107 474h1v1h-1zM108 472h1v2h-1zM109 471h1v1h-1zM110 469h1v2h-1zM111 468h1v1h-1zM112 467h1v1h-1zM113 465h1v2h-1zM114 464h1v1h-1zM115 462h1v2h-1zM116 461h1v1h-1zM117 460h1v1h-1zM118 458h1v2h-1zM119 457h1v1h-1zM120 456h1v1h-1zM121 454h1v2h-1zM122 453h2v1h-2zM124 452h2v1h-2zM126 451h3v1h-3zM129 450h3v1h-3zM132 449h2v1h-2zM134 448h8v1h-8zM142 447h13v1h-13zM155 448h10v1h-10zM165 449h6v1h-6zM171 450h4v1h-4zM175 451h4v1h-4zM179 452h3v1h-3zM182 453h4v1h-4zM186 454h4v1h-4zM190 453h6v1h-6zM196 452h4v1h-4zM200 451h3v1h-3zM203 450h3v1h-3zM206 449h2v1h-2zM208 448h3v1h-3zM211 447h17v1h-17zM228 446h2v1h-2zM230 445h2v1h-2zM232 444h1v1h-1zM233 443h2v1h-2zM235 442h2v1h-2zM237 441h4v1h-4zM241 440h6v1h-6zM247 439h10v1h-10zM257 438h13v1h-13zM270 437h10v1h-10zM280 438h4v1h-4zM284 439h3v1h-3zM287 440h3v1h-3zM290 441h2v1h-2zM292 442h2v1h-2zM294 443h1v1h-1zM295 444h1v1h-1zM296 445h1v1h-1zM297 446h1v1h-1zM298 447h1v1h-1zM299 448h1v1h-1zM300 449h1v1h-1zM301 450h1v1h-1zM302 451h1v1h-1zM303 452h1v1h-1zM304 453h1v1h-1zM305 454h1v1h-1zM306 455h1v1h-1zM307 456h1v1h-1zM308 457h1v1h-1zM309 458h1v1h-1zM310 459h1v1h-1zM311 460h1v1h-1zM312 461h1v1h-1zM313 462h1v1h-1zM314 463h1v1h-1zM315 464h1v1h-1zM316 465h1v1h-1zM317 466h1v1h-1zM318 467h1v1h-1zM319 468h1v1h-1zM320 469h1v1h-1zM321 470h1v2h-1zM322 472h1v1h-1zM323 473h1v1h-1zM324 474h1v1h-1zM325 475h1v1h-1zM326 476h1v1h-1zM327 477h1v2h-1zM328 479h1v1h-1zM329 480h1v1h-1zM330 481h1v1h-1zM331 482h2v1h-2zM333 483h2v1h-2zM335 484h2v1h-2zM337 485h2v1h-2zM339 486h2v1h-2zM341 487h2v1h-2zM343 488h1v1h-1zM344 489h2v1h-2zM346 490h1v1h-1zM347 491h2v1h-2zM349 492h1v1h-1zM350 493h2v1h-2zM352 494h1v1h-1zM353 495h2v1h-2zM355 496h2v1h-2zM357 497h4v1h-4zM361 498h4v1h-4zM365 499h3v1h-3zM368 500h2v1h-2zM370 501h6v1h-6zM376 502h6v1h-6zM382 501h2v1h-2zM384 500h2v1h-2zM386 499h2v1h-2zM388 498h2v1h-2zM390 497h2v1h-2zM392 496h1v1h-1zM393 495h2v1h-2zM395 494h2v1h-2zM397 493h2v1h-2zM399 492h2v1h-2zM401 491h2v1h-2zM403 490h2v1h-2zM405 489h2v1h-2zM407 488h2v1h-2zM409 487h3v1h-3zM412 486h4v1h-4zM416 485h3v1h-3zM419 484h4v1h-4zM423 483h5v1h-5zM428 482h5v1h-5zM433 481h6v1h-6zM439 480h6v1h-6zM445 479h5v1h-5zM450 478h4v1h-4zM454 477h4v1h-4zM458 476h4v1h-4zM462 475h2v1h-2zM464 474h3v1h-3zM467 473h3v1h-3zM470 472h2v1h-2zM472 471h3v1h-3zM475 470h2v1h-2zM477 469h2v1h-2zM479 468h2v1h-2zM481 467h2v1h-2zM483 466h2v1h-2zM485 465h2v1h-2zM487 464h3v1h-3zM490 463h3v1h-3zM493 462h3v1h-3zM496 461h3v1h-3zM499 460h15v1h-15zM514 459h2v1h-2zM516 458h1v1h-1zM517 457h2v1h-2zM519 456h1v1h-1zM520 455h2v1h-2zM522 454h1v1h-1zM523 453h2v1h-2zM525 452h2v1h-2zM527 451h2v1h-2zM529 450h2v1h-2zM531 449h2v1h-2zM533 448h2v1h-2zM535 447h2v1h-2zM537 446h2v1h-2zM539 447h2v1h-2zM541 448h1v1h-1zM542 449h1v1h-1zM543 450h2v1h-2zM545 451h1v1h-1zM546 452h1v1h-1zM547 453h2v1h-2zM549 454h2v1h-2zM551 455h2v1h-2zM553 456h2v1h-2zM555 457h1v1h-1zM556 458h2v1h-2zM558 459h2v1h-2zM560 460h2v1h-2zM562 461h1v1h-1zM563 462h2v1h-2zM565 463h2v1h-2zM567 464h1v1h-1zM568 465h2v1h-2zM570 466h2v1h-2zM572 467h1v1h-1zM573 468h2v1h-2zM575 469h1v1h-1zM576 470h2v1h-2zM578 471h2v1h-2zM580 472h2v1h-2zM582 473h2v1h-2zM584 474h2v1h-2zM586 475h2v1h-2zM588 476h2v1h-2zM590 477h2v1h-2zM592 478h3v1h-3zM595 479h4v1h-4zM599 480h4v1h-4zM603 481h3v1h-3zM606 482h2v1h-2zM608 483h2v1h-2zM610 484h2v1h-2zM612 485h2v1h-2zM614 486h2v1h-2zM616 487h21v1h-21zM637 486h9v1h-9zM646 485h6v1h-6zM652 484h4v1h-4zM656 483h2v1h-2zM658 482h2v1h-2zM660 481h1v1h-1zM661 480h2v1h-2zM663 479h2v1h-2zM665 478h1v1h-1zM666 477h1v1h-1zM667 476h1v1h-1zM668 475h1v1h-1zM669 474h1v1h-1zM670 472h1v2h-1zM671 471h1v1h-1zM672 470h1v1h-1zM673 469h1v1h-1zM674 468h1v1h-1zM675 467h1v1h-1zM676 466h1v1h-1zM677 465h1v1h-1zM678 463h1v2h-1zM679 462h1v1h-1zM680 461h1v1h-1zM681 460h1v1h-1zM682 459h1v1h-1zM683 458h1v1h-1zM684 457h1v1h-1zM685 455h1v2h-1zM686 454h1v1h-1zM687 453h1v1h-1zM688 452h1v1h-1zM689 450h1v2h-1zM690 449h1v1h-1zM691 447h1v2h-1zM692 446h1v1h-1zM693 444h1v2h-1zM694 443h1v1h-1zM695 441h1v2h-1zM696 440h1v1h-1zM697 438h1v2h-1zM698 437h1v1h-1zM699 435h1v2h-1zM700 434h1v1h-1zM701 432h1v2h-1zM702 430h1v2h-1zM703 429h1v1h-1zM704 427h1v2h-1zM705 425h1v2h-1zM706 423h1v2h-1zM707 422h1v1h-1zM708 420h1v2h-1zM709 418h1v2h-1zM710 416h1v2h-1zM711 414h1v2h-1zM712 412h1v2h-1zM713 409h1v3h-1zM714 407h1v2h-1zM715 405h1v2h-1zM716 403h1v2h-1zM717 400h1v3h-1zM718 398h1v2h-1zM719 396h1v2h-1zM720 394h1v2h-1zM721 392h1v2h-1zM722 390h1v2h-1zM723 388h1v2h-1zM724 386h1v2h-1zM725 385h1v1h-1zM726 383h1v2h-1zM727 381h1v2h-1zM728 380h1v1h-1zM729 378h1v2h-1zM730 376h1v2h-1zM731 375h1v1h-1zM732 373h1v2h-1zM733 371h1v2h-1zM734 370h1v1h-1zM735 369h2v1h-2zM737 368h1v1h-1zM738 367h1v1h-1zM739 366h2v1h-2z" fill="#d8a0e8"/>
<path d="M3 531h11v1h-11zM14 530h8v1h-8zM22 529h6v1h-6zM28 528h4v1h-4zM32 527h4v1h-4zM36 526h4v1h-4zM40 525h4v1h-4zM44 524h4v1h-4zM48 523h4v1h-4zM52 522h4v1h-4zM56 521h3v1h-3zM59 520h2v1h-2zM61 519h3v1h-3zM64 518h3v1h-3zM67 517h2v1h-2zM69 516h3v1h-3zM72 515h3v1h-3zM75 514h2v1h-2zM77 513h2v1h-2zM79 512h2v1h-2zM81 511h2v1h-2zM83 510h1v1h-1zM84 509h2v1h-2zM86 508h2v1h-2zM88 507h2v1h-2zM90 506h2v1h-2zM92 505h2v1h-2zM94 504h2v1h-2zM96 503h1v1h-1zM97 502h1v1h-1zM98 501h2v1h-2zM100 500h1v1h-1zM101 499h1v1h-1zM102 498h1v1h-1zM103 497h1v1h-1zM104 496h1v1h-1zM105 495h1v1h-1zM106 494h1v1h-1zM107 493h1v1h-1zM108 492h1v1h-1zM109 491h1v1h-1zM110 490h1v1h-1zM111 489h1v1h-1zM112 488h1v1h-1zM113 487h1v1h-1zM114 486h1v1h-1zM115 485h2v1h-2zM117 484h1v1h-1zM118 483h1v1h-1zM119 482h1v1h-1zM120 481h1v1h-1zM121 480h1v1h-1zM122 479h1v1h-1zM123 478h1v1h-1zM124 477h2v1h-2zM126 476h1v1h-1zM127 475h1v1h-1zM128 474h2v1h-2zM130 473h1v1h-1zM131 472h1v1h-1zM132 471h2v1h-2zM134 470h1v1h-1zM135 469h2v1h-2zM137 468h2v1h-2zM139 467h2v1h-2zM141 466h2v1h-2zM143 465h2v1h-2zM145 464h2v1h-2zM147 463h3v1h-3zM150 462h2v1h-2zM152 461h2v1h-2zM154 460h2v1h-2zM156 459h2v1h-2zM158 458h2v1h-2zM160 457h6v1h-6zM166 456h7v1h-7zM173 455h5v1h-5zM178 454h13v1h-13zM191 453h6v1h-6zM197 452h7v1h-7zM204 451h6v1h-6zM210 450h19v1h-19zM229 449h4v1h-4zM233 448h3v1h-3zM236 447h4v1h-4zM240 446h4v1h-4zM244 445h4v1h-4zM248 444h6v1h-6zM254 443h6v1h-6zM260 442h6v1h-6zM266 441h8v1h-8zM274 440h12v1h-12zM286 441h9v1h-9zM295 442h3v1h-3zM298 443h3v1h-3zM301 444h3v1h-3zM304 445h2v1h-2zM306 446h2v1h-2zM308 447h2v1h-2zM310 448h2v1h-2zM312 449h2v1h-2zM314 450h2v1h-2zM316 451h2v1h-2zM318 452h1v1h-1zM319 453h1v1h-1zM320 454h2v1h-2zM322 455h1v1h-1zM323 456h1v1h-1zM324 457h1v1h-1zM325 458h1v1h-1zM326 459h2v1h-2zM328 460h1v1h-1zM329 461h1v1h-1zM330 462h1v1h-1zM331 463h2v1h-2zM333 464h1v1h-1zM334 465h2v1h-2zM336 466h1v1h-1zM337 467h1v1h-1zM338 468h2v1h-2zM340 469h1v1h-1zM341 470h2v1h-2zM343 471h1v1h-1zM344 472h2v1h-2zM346 473h2v1h-2zM348 474h2v1h-2zM350 475h1v1h-1zM351 476h2v1h-2zM353 477h2v1h-2zM355 478h2v1h-2zM357 479h2v1h-2zM359 480h2v1h-2zM361 481h2v1h-2zM363 482h2v1h-2zM365 483h2v1h-2zM367 484h2v1h-2zM369 485h1v1h-1zM370 486h2v1h-2zM372 487h2v1h-2zM374 488h2v1h-2zM376 489h2v1h-2zM378 490h2v1h-2zM380 491h2v1h-2zM382 492h19v1h-19zM401 491h10v1h-10zM411 490h6v1h-6zM417 489h6v1h-6zM423 488h5v1h-5zM428 487h5v1h-5zM433 486h5v1h-5zM438 485h4v1h-4zM442 484h4v1h-4zM446 483h5v1h-5zM451 482h6v1h-6zM457 481h5v1h-5zM462 480h3v1h-3zM465 479h4v1h-4zM469 478h3v1h-3zM472 477h3v1h-3zM475 476h3v1h-3zM478 475h3v1h-3zM481 474h3v1h-3zM484 473h3v1h-3zM487 472h4v1h-4zM491 471h4v1h-4zM495 470h4v1h-4zM499 469h4v1h-4zM503 468h4v1h-4zM507 467h4v1h-4zM511 466h4v1h-4zM515 465h2v1h-2zM517 464h2v1h-2zM519 463h2v1h-2zM521 462h2v1h-2zM523 461h2v1h-2zM525 460h2v1h-2zM527 459h2v1h-2zM529 458h3v1h-3zM532 457h3v1h-3zM535 456h2v1h-2zM537 455h12v1h-12zM549 456h4v1h-4zM553 457h8v1h-8zM561 458h6v1h-6zM567 459h2v1h-2zM569 460h3v1h-3zM572 461h2v1h-2zM574 462h3v1h-3zM577 463h2v1h-2zM579 464h3v1h-3zM582 465h2v1h-2zM584 466h3v1h-3zM587 467h2v1h-2zM589 468h2v1h-2zM591 469h3v1h-3zM594 470h2v1h-2zM596 471h3v1h-3zM599 472h3v1h-3zM602 473h2v1h-2zM604 474h3v1h-3zM607 475h3v1h-3zM610 476h3v1h-3zM613 477h3v1h-3zM616 478h5v1h-5zM621 479h6v1h-6zM627 480h7v1h-7zM634 481h6v1h-6zM640 482h9v1h-9zM649 483h8v1h-8zM657 482h3v1h-3zM660 481h4v1h-4zM664 480h3v1h-3zM667 479h3v1h-3zM670 478h2v1h-2zM672 477h3v1h-3zM675 476h2v1h-2zM677 475h2v1h-2zM679 474h2v1h-2zM681 473h1v1h-1zM682 472h2v1h-2zM684 471h1v1h-1zM685 470h1v1h-1zM686 469h2v1h-2zM688 468h1v1h-1zM689 467h1v1h-1zM690 466h2v1h-2zM692 465h1v1h-1zM693 464h1v1h-1zM694 463h1v1h-1zM695 462h1v1h-1zM696 461h1v1h-1zM697 460h1v1h-1zM698 459h1v1h-1zM699 458h1v1h-1zM700 457h1v1h-1zM701 456h1v1h-1zM702 455h1v1h-1zM703 454h1v1h-1zM704 453h1v1h-1zM705 452h1v1h-1zM706 450h1v2h-1zM707 449h1v1h-1zM708 448h1v1h-1zM709 446h1v2h-1zM710 445h1v1h-1zM711 443h1v2h-1zM712 442h1v1h-1zM713 441h1v1h-1zM714 439h1v2h-1zM715 438h1v1h-1zM716 437h1v1h-1zM717 435h1v2h-1zM718 434h1v1h-1zM719 432h1v2h-1zM720 431h1v1h-1zM721 429h1v2h-1zM722 427h1v2h-1zM723 426h1v1h-1zM724 424h1v2h-1zM725 423h1v1h-1zM726 421h1v2h-1zM727 419h1v2h-1zM728 418h1v1h-1zM729 416h1v2h-1zM730 415h1v1h-1zM731 414h1v1h-1zM732 412h1v2h-1zM733 411h1v1h-1zM734 410h1v1h-1zM735 409h1v1h-1zM736 408h1v1h-1zM737 406h1v2h-1zM738 405h1v1h-1zM739 404h1v1h-1zM740 403h1v1h-1z" fill="#00e0e0"/>
<path d="M3 529h16v1h-16zM19 528h3v1h-3zM22 527h3v1h-3zM25 526h3v1h-3zM28 525h2v1h-2zM30 524h3v1h-3zM33 523h3v1h-3zM36 522h4v1h-4zM40 521h4v1h-4zM44 520h4v1h-4zM48 519h4v1h-4zM52 518h4v1h-4zM56 517h3v1h-3zM59 516h2v1h-2zM61 515h2v1h-2zM63 514h2v1h-2zM65 513h2v1h-2zM67 512h2v1h-2zM69 511h2v1h-2zM71 510h2v1h-2zM73 509h2v1h-2zM75 508h1v1h-1zM76 507h2v1h-2zM78 506h1v1h-1zM79 505h2v1h-2zM81 504h2v1h-2zM83 503h1v1h-1zM84 502h2v1h-2zM86 501h1v1h-1zM87 500h2v1h-2zM89 499h2v1h-2zM91 498h2v1h-2zM93 497h2v1h-2zM95 496h1v1h-1zM96 495h1v1h-1zM97 494h1v1h-1zM98 493h1v1h-1zM99 491h1v2h-1zM100 490h1v1h-1zM101 489h1v1h-1zM102 488h1v1h-1zM103 487h1v1h-1zM104 486h1v1h-1zM105 485h1v1h-1zM106 484h1v1h-1zM107 483h1v1h-1zM108 482h1v1h-1zM109 481h1v1h-1zM110 480h1v1h-1zM111 478h1v2h-1zM112 477h1v1h-1zM113 476h1v1h-1zM114 475h1v1h-1zM115 473h1v2h-1zM116 472h1v1h-1zM117 471h1v1h-1zM118 470h1v1h-1zM119 469h1v1h-1zM120 467h1v2h-1zM121 466h1v1h-1zM122 465h1v1h-1zM123 464h2v1h-2zM125 463h2v1h-2zM127 462h1v1h-1zM128 461h2v1h-2zM130 460h1v1h-1zM131 459h2v1h-2zM133 458h2v1h-2zM135 457h4v1h-4zM139 456h6v1h-6zM145 455h5v1h-5zM150 454h3v1h-3zM153 453h4v1h-4zM157 452h3v1h-3zM160 451h5v1h-5zM165 452h7v1h-7zM172 453h11v1h-11zM183 454h13v1h-13zM196 453h6v1h-6zM202 452h3v1h-3zM205 451h3v1h-3zM208 450h3v1h-3zM211 449h9v1h-9zM220 448h9v1h-9zM229 447h2v1h-2zM231 446h3v1h-3zM234 445h2v1h-2zM236 444h5v1h-5zM241 443h6v1h-6zM247 442h7v1h-7zM254 441h6v1h-6zM260 440h7v1h-7zM267 439h8v1h-8zM275 438h8v1h-8zM283 439h4v1h-4zM287 440h3v1h-3zM290 441h2v1h-2zM292 442h2v1h-2zM294 443h2v1h-2zM296 444h2v1h-2zM298 445h2v1h-2zM300 446h1v1h-1zM301 447h2v1h-2zM303 448h2v1h-2zM305 449h1v1h-1zM306 450h1v1h-1zM307 451h1v1h-1zM308 452h1v1h-1zM309 453h1v1h-1zM310 454h1v1h-1zM311 455h2v1h-2zM313 456h1v1h-1zM314 457h1v1h-1zM315 458h1v1h-1zM316 459h1v1h-1zM317 460h1v1h-1zM318 461h1v1h-1zM319 462h1v1h-1zM320 463h2v1h-2zM322 464h1v1h-1zM323 465h1v1h-1zM324 466h1v1h-1zM325 467h1v1h-1zM326 468h2v1h-2zM328 469h1v1h-1zM329 470h1v1h-1zM330 471h1v1h-1zM331 472h2v1h-2zM333 473h2v1h-2zM335 474h1v1h-1zM336 475h2v1h-2zM338 476h1v1h-1zM339 477h2v1h-2zM341 478h2v1h-2zM343 479h1v1h-1zM344 480h2v1h-2zM346 481h1v1h-1zM347 482h2v1h-2zM349 483h1v1h-1zM350 484h2v1h-2zM352 485h1v1h-1zM353 486h2v1h-2zM355 487h2v1h-2zM357 488h2v1h-2zM359 489h2v1h-2zM361 490h2v1h-2zM363 491h2v1h-2zM365 492h2v1h-2zM367 493h2v1h-2zM369 494h1v1h-1zM370 495h2v1h-2zM372 496h16v1h-16zM388 495h5v1h-5zM393 494h4v1h-4zM397 493h2v1h-2zM399 492h3v1h-3zM402 491h2v1h-2zM404 490h2v1h-2zM406 489h4v1h-4zM410 488h4v1h-4zM414 487h4v1h-4zM418 486h5v1h-5zM423 485h5v1h-5zM428 484h5v1h-5zM433 483h6v1h-6zM439 482h6v1h-6zM445 481h5v1h-5zM450 480h4v1h-4zM454 479h4v1h-4zM458 478h4v1h-4zM462 477h3v1h-3zM465 476h4v1h-4zM469 475h3v1h-3zM472 474h3v1h-3zM475 473h2v1h-2zM477 472h3v1h-3zM480 471h2v1h-2zM482 470h2v1h-2zM484 469h3v1h-3zM487 468h3v1h-3zM490 467h3v1h-3zM493 466h3v1h-3zM496 465h3v1h-3zM499 464h8v1h-8zM507 463h7v1h-7zM514 462h2v1h-2zM516 461h2v1h-2zM518 460h2v1h-2zM520 459h1v1h-1zM521 458h2v1h-2zM523 457h2v1h-2zM525 456h2v1h-2zM527 455h3v1h-3zM530 454h3v1h-3zM533 453h2v1h-2zM535 452h3v1h-3zM538 451h3v1h-3zM541 452h4v1h-4zM545 453h3v1h-3zM548 454h3v1h-3zM551 455h3v1h-3zM554 456h2v1h-2zM556 457h2v1h-2zM558 458h2v1h-2zM560 459h2v1h-2zM562 460h1v1h-1zM563 461h2v1h-2zM565 462h2v1h-2zM567 463h2v1h-2zM569 464h2v1h-2zM571 465h2v1h-2zM573 466h2v1h-2zM575 467h2v1h-2zM577 468h2v1h-2zM579 469h3v1h-3zM582 470h3v1h-3zM585 471h2v1h-2zM587 472h3v1h-3zM590 473h3v1h-3zM593 474h3v1h-3zM596 475h3v1h-3zM599 476h2v1h-2zM601 477h3v1h-3zM604 478h4v1h-4zM608 479h4v1h-4zM612 480h4v1h-4zM616 481h4v1h-4zM620 482h4v1h-4zM624 483h4v1h-4zM628 484h29v1h-29zM657 483h2v1h-2zM659 482h3v1h-3zM662 481h2v1h-2zM664 480h2v1h-2zM666 479h2v1h-2zM668 478h2v1h-2zM670 477h1v1h-1zM671 476h1v1h-1zM672 475h1v1h-1zM673 474h1v1h-1zM674 473h1v1h-1zM675 472h1v1h-1zM676 471h1v1h-1zM677 470h1v1h-1zM678 469h1v1h-1zM679 468h1v1h-1zM680 467h1v1h-1zM681 466h1v1h-1zM682 465h1v1h-1zM683 464h1v1h-1zM684 463h1v1h-1zM685 462h1v1h-1zM686 461h1v1h-1zM687 460h1v1h-1zM688 459h1v1h-1zM689 458h1v1h-1zM690 457h1v1h-1zM691 456h1v1h-1zM692 455h1v1h-1zM693 454h1v1h-1zM694 452h1v2h-1zM695 451h1v1h-1zM696 450h1v1h-1zM697 448h1v2h-1zM698 447h1v1h-1zM699 446h1v1h-1zM700 444h1v2h-1zM701 443h1v1h-1zM702 442h1v1h-1zM703 440h1v2h-1zM704 439h1v1h-1zM705 438h1v1h-1zM706 436h1v2h-1zM707 434h1v2h-1zM708 432h1v2h-1zM709 430h1v2h-1zM710 429h1v1h-1zM711 427h1v2h-1zM712 425h1v2h-1zM713 423h1v2h-1zM714 421h1v2h-1zM715 420h1v1h-1zM716 418h1v2h-1zM717 416h1v2h-1zM718 415h1v1h-1zM719 413h1v2h-1zM720 411h1v2h-1zM721 409h1v2h-1zM722 408h1v1h-1zM723 406h1v2h-1zM724 404h1v2h-1zM725 403h1v1h-1zM726 401h1v2h-1zM727 400h1v1h-1zM728 398h1v2h-1zM729 397h1v1h-1zM730 396h1v1h-1zM731 394h1v2h-1zM732 393h1v1h-1zM733 391h1v2h-1zM734 390h1v1h-1zM735 389h1v1h-1zM736 388h1v1h-1zM737 386h1v2h-1zM738 385h1v1h-1zM739 384h1v1h-1zM740 383h1v1h-1z" fill="#17171c"/>
<path d="M3 529h15v1h-15z" fill="#d0d0d0"/>
<path d="M161 451h4v1h-4zM165 452h7v1h-7zM172 453h11v1h-11zM183 454h13v1h-13zM196 453h5v1h-5z" fill="#d0d0d0"/>
<path d="M279 438h4v1h-4zM283 439h4v1h-4zM287 440h3v1h-3zM290 441h2v1h-2zM292 442h2v1h-2z" fill="#d0d0d0"/>
<path d="M385 496h3v1h-3zM388 495h5v1h-5zM393 494h3v1h-3z" fill="#d0d0d0"/>
<path d="M539 451h2v1h-2zM541 452h4v1h-4zM545 453h3v1h-3zM548 454h3v1h-3zM551 455h3v1h-3zM554 456h2v1h-2z" fill="#d0d0d0"/>
<path d="M655 484h2v1h-2zM657 483h2v1h-2zM659 482h3v1h-3zM662 481h2v1h-2zM664 480h2v1h-2zM666 479h2v1h-2zM668 478h2v1h-2z" fill="#d0d0d0"/>
<path d="M3 529h16v1h-16zM19 528h3v1h-3zM22 527h3v1h-3zM25 526h3v1h-3zM28 525h2v1h-2zM30 524h3v1h-3zM33 523h3v1h-3zM36 522h4v1h-4zM40 521h4v1h-4zM44 520h4v1h-4zM48 519h4v1h-4zM52 518h4v1h-4zM56 517h3v1h-3zM59 516h2v1h-2zM61 515h2v1h-2zM63 514h2v1h-2zM65 513h2v1h-2zM67 512h2v1h-2zM69 511h2v1h-2zM71 510h2v1h-2zM73 509h2v1h-2zM75 508h1v1h-1zM76 507h2v1h-2zM78 506h1v1h-1zM79 505h2v1h-2zM81 504h2v1h-2zM83 503h1v1h-1zM84 502h2v1h-2zM86 501h1v1h-1zM87 500h2v1h-2zM89 499h2v1h-2zM91 498h2v1h-2zM93 497h2v1h-2zM95 496h1v1h-1zM96 495h1v1h-1zM97 494h1v1h-1zM98 493h1v1h-1zM99 491h1v2h-1zM100 490h1v1h-1zM101 489h1v1h-1zM102 488h1v1h-1zM103 487h1v1h-1zM104 486h1v1h-1zM105 485h1v1h-1zM106 484h1v1h-1zM107 483h1v1h-1zM108 482h1v1h-1zM109 481h1v1h-1zM110 480h1v1h-1zM111 478h1v2h-1zM112 477h1v1h-1zM113 476h1v1h-1zM114 475h1v1h-1zM115 473h1v2h-1zM116 472h1v1h-1zM117 471h1v1h-1zM118 470h1v1h-1zM119 469h1v1h-1zM120 467h1v2h-1zM121 466h1v1h-1zM122 465h1v1h-1zM123 464h2v1h-2zM125 463h2v1h-2zM127 462h1v1h-1zM128 461h2v1h-2zM130 460h1v1h-1zM131 459h2v1h-2zM133 458h2v1h-2zM135 457h4v1h-4zM139 456h6v1h-6zM145 455h5v1h-5zM150 454h3v1h-3zM153 453h4v1h-4zM157 452h3v1h-3zM160 451h2v1h-2z" fill="#ff0000"/>
<path d="M2 529h16v1h-16zM18 528h3v1h-3zM21 527h3v1h-3zM24 526h3v1h-3zM27 525h2v1h-2zM29 524h3v1h-3zM32 523h3v1h-3zM35 522h4v1h-4zM39 521h4v1h-4zM43 520h4v1h-4zM47 519h4v1h-4zM51 518h4v1h-4zM55 517h3v1h-3zM58 516h2v1h-2zM60 515h2v1h-2zM62 514h2v1h-2zM64 513h2v1h-2zM66 512h2v1h-2zM68 511h2v1h-2zM70 510h2v1h-2zM72 509h2v1h-2zM74 508h1v1h-1zM75 507h2v1h-2zM77 506h1v1h-1zM78 505h2v1h-2zM80 504h2v1h-2zM82 503h1v1h-1zM83 502h2v1h-2zM85 501h1v1h-1zM86 500h2v1h-2zM88 499h2v1h-2zM90 498h2v1h-2zM92 497h2v1h-2zM94 496h1v1h-1zM95 495h1v1h-1zM96 494h1v1h-1zM97 493h1v1h-1zM98 491h1v2h-1zM99 490h1v1h-1zM100 489h1v1h-1zM101 488h1v1h-1zM102 487h1v1h-1zM103 486h1v1h-1zM104 485h1v1h-1zM105 484h1v1h-1zM106 483h1v1h-1zM107 482h1v1h-1zM108 481h1v1h-1zM109 480h1v1h-1zM110 478h1v2h-1zM111 477h1v1h-1zM112 476h1v1h-1zM113 475h1v1h-1zM114 473h1v2h-1zM115 472h1v1h-1zM116 471h1v1h-1zM117 470h1v1h-1zM118 469h1v1h-1zM119 467h1v2h-1zM120 466h1v1h-1zM121 465h1v1h-1zM122 464h2v1h-2zM124 463h2v1h-2zM126 462h1v1h-1zM127 461h2v1h-2zM129 460h1v1h-1zM130 459h2v1h-2zM132 458h2v1h-2zM134 457h4v1h-4zM138 456h6v1h-6zM144 455h5v1h-5zM149 454h3v1h-3zM152 453h4v1h-4zM156 452h3v1h-3zM159 451h2v1h-2z" fill="#ff0000"/>
<path d="M4 529h16v1h-16zM20 528h3v1h-3zM23 527h3v1h-3zM26 526h3v1h-3zM29 525h2v1h-2zM31 524h3v1h-3zM34 523h3v1h-3zM37 522h4v1h-4zM41 521h4v1h-4zM45 520h4v1h-4zM49 519h4v1h-4zM53 518h4v1h-4zM57 517h3v1h-3zM60 516h2v1h-2zM62 515h2v1h-2zM64 514h2v1h-2zM66 513h2v1h-2zM68 512h2v1h-2zM70 511h2v1h-2zM72 510h2v1h-2zM74 509h2v1h-2zM76 508h1v1h-1zM77 507h2v1h-2zM79 506h1v1h-1zM80 505h2v1h-2zM82 504h2v1h-2zM84 503h1v1h-1zM85 502h2v1h-2zM87 501h1v1h-1zM88 500h2v1h-2zM90 499h2v1h-2zM92 498h2v1h-2zM94 497h2v1h-2zM96 496h1v1h-1zM97 495h1v1h-1zM98 494h1v1h-1zM99 493h1v1h-1zM100 491h1v2h-1zM101 490h1v1h-1zM102 489h1v1h-1zM103 488h1v1h-1zM104 487h1v1h-1zM105 486h1v1h-1zM106 485h1v1h-1zM107 484h1v1h-1zM108 483h1v1h-1zM109 482h1v1h-1zM110 481h1v1h-1zM111 480h1v1h-1zM112 478h1v2h-1zM113 477h1v1h-1zM114 476h1v1h-1zM115 475h1v1h-1zM116 473h1v2h-1zM117 472h1v1h-1zM118 471h1v1h-1zM119 470h1v1h-1zM120 469h1v1h-1zM121 467h1v2h-1zM122 466h1v1h-1zM123 465h1v1h-1zM124 464h2v1h-2zM126 463h2v1h-2zM128 462h1v1h-1zM129 461h2v1h-2zM131 460h1v1h-1zM132 459h2v1h-2zM134 458h2v1h-2zM136 457h4v1h-4zM140 456h6v1h-6zM146 455h5v1h-5zM151 454h3v1h-3zM154 453h4v1h-4zM158 452h3v1h-3zM161 451h2v1h-2z" fill="#ff0000"/>
<path d="M3 528h16v1h-16zM19 527h3v1h-3zM22 526h3v1h-3zM25 525h3v1h-3zM28 524h2v1h-2zM30 523h3v1h-3zM33 522h3v1h-3zM36 521h4v1h-4zM40 520h4v1h-4zM44 519h4v1h-4zM48 518h4v1h-4zM52 517h4v1h-4zM56 516h3v1h-3zM59 515h2v1h-2zM61 514h2v1h-2zM63 513h2v1h-2zM65 512h2v1h-2zM67 511h2v1h-2zM69 510h2v1h-2zM71 509h2v1h-2zM73 508h2v1h-2zM75 507h1v1h-1zM76 506h2v1h-2zM78 505h1v1h-1zM79 504h2v1h-2zM81 503h2v1h-2zM83 502h1v1h-1zM84 501h2v1h-2zM86 500h1v1h-1zM87 499h2v1h-2zM89 498h2v1h-2zM91 497h2v1h-2zM93 496h2v1h-2zM95 495h1v1h-1zM96 494h1v1h-1zM97 493h1v1h-1zM98 492h1v1h-1zM99 490h1v2h-1zM100 489h1v1h-1zM101 488h1v1h-1zM102 487h1v1h-1zM103 486h1v1h-1zM104 485h1v1h-1zM105 484h1v1h-1zM106 483h1v1h-1zM107 482h1v1h-1zM108 481h1v1h-1zM109 480h1v1h-1zM110 479h1v1h-1zM111 477h1v2h-1zM112 476h1v1h-1zM113 475h1v1h-1zM114 474h1v1h-1zM115 472h1v2h-1zM116 471h1v1h-1zM117 470h1v1h-1zM118 469h1v1h-1zM119 468h1v1h-1zM120 466h1v2h-1zM121 465h1v1h-1zM122 464h1v1h-1zM123 463h2v1h-2zM125 462h2v1h-2zM127 461h1v1h-1zM128 460h2v1h-2zM130 459h1v1h-1zM131 458h2v1h-2zM133 457h2v1h-2zM135 456h4v1h-4zM139 455h6v1h-6zM145 454h5v1h-5zM150 453h3v1h-3zM153 452h4v1h-4zM157 451h3v1h-3zM160 450h2v1h-2z" fill="#ff0000"/>
<path d="M3 530h16v1h-16zM19 529h3v1h-3zM22 528h3v1h-3zM25 527h3v1h-3zM28 526h2v1h-2zM30 525h3v1h-3zM33 524h3v1h-3zM36 523h4v1h-4zM40 522h4v1h-4zM44 521h4v1h-4zM48 520h4v1h-4zM52 519h4v1h-4zM56 518h3v1h-3zM59 517h2v1h-2zM61 516h2v1h-2zM63 515h2v1h-2zM65 514h2v1h-2zM67 513h2v1h-2zM69 512h2v1h-2zM71 511h2v1h-2zM73 510h2v1h-2zM75 509h1v1h-1zM76 508h2v1h-2zM78 507h1v1h-1zM79 506h2v1h-2zM81 505h2v1h-2zM83 504h1v1h-1zM84 503h2v1h-2zM86 502h1v1h-1zM87 501h2v1h-2zM89 500h2v1h-2zM91 499h2v1h-2zM93 498h2v1h-2zM95 497h1v1h-1zM96 496h1v1h-1zM97 495h1v1h-1zM98 494h1v1h-1zM99 492h1v2h-1zM100 491h1v1h-1zM101 490h1v1h-1zM102 489h1v1h-1zM103 488h1v1h-1zM104 487h1v1h-1zM105 486h1v1h-1zM106 485h1v1h-1zM107 484h1v1h-1zM108 483h1v1h-1zM109 482h1v1h-1zM110 481h1v1h-1zM111 479h1v2h-1zM112 478h1v1h-1zM113 477h1v1h-1zM114 476h1v1h-1zM115 474h1v2h-1zM116 473h1v1h-1zM117 472h1v1h-1zM118 471h1v1h-1zM119 470h1v1h-1zM120 468h1v2h-1zM121 467h1v1h-1zM122 466h1v1h-1zM123 465h2v1h-2zM125 464h2v1h-2zM127 463h1v1h-1zM128 462h2v1h-2zM130 461h1v1h-1zM131 460h2v1h-2zM133 459h2v1h-2zM135 458h4v1h-4zM139 457h6v1h-6zM145 456h5v1h-5zM150 455h3v1h-3zM153 454h4v1h-4zM157 453h3v1h-3zM160 452h2v1h-2z" fill="#ff0000"/>
<path d="M200 453h2v1h-2zM202 452h3v1h-3zM205 451h3v1h-3zM208 450h3v1h-3zM211 449h9v1h-9zM220 448h9v1h-9zM229 447h2v1h-2zM231 446h3v1h-3zM234 445h2v1h-2zM236 444h5v1h-5zM241 443h6v1h-6zM247 442h7v1h-7zM254 441h6v1h-6zM260 440h7v1h-7zM267 439h8v1h-8zM275 438h5v1h-5z" fill="#ff0000"/>
<path d="M199 453h2v1h-2zM201 452h3v1h-3zM204 451h3v1h-3zM207 450h3v1h-3zM210 449h9v1h-9zM219 448h9v1h-9zM228 447h2v1h-2zM230 446h3v1h-3zM233 445h2v1h-2zM235 444h5v1h-5zM240 443h6v1h-6zM246 442h7v1h-7zM253 441h6v1h-6zM259 440h7v1h-7zM266 439h8v1h-8zM274 438h5v1h-5z" fill="#ff0000"/>
<path d="M201 453h2v1h-2zM203 452h3v1h-3zM206 451h3v1h-3zM209 450h3v1h-3zM212 449h9v1h-9zM221 448h9v1h-9zM230 447h2v1h-2zM232 446h3v1h-3zM235 445h2v1h-2zM237 444h5v1h-5zM242 443h6v1h-6zM248 442h7v1h-7zM255 441h6v1h-6zM261 440h7v1h-7zM268 439h8v1h-8zM276 438h5v1h-5z" fill="#ff0000"/>
<path d="M200 452h2v1h-2zM202 451h3v1h-3zM205 450h3v1h-3zM208 449h3v1h-3zM211 448h9v1h-9zM220 447h9v1h-9zM229 446h2v1h-2zM231 445h3v1h-3zM234 444h2v1h-2zM236 443h5v1h-5zM241 442h6v1h-6zM247 441h7v1h-7zM254 440h6v1h-6zM260 439h7v1h-7zM267 438h8v1h-8zM275 437h5v1h-5z" fill="#ff0000"/>
<path d="M200 454h2v1h-2zM202 453h3v1h-3zM205 452h3v1h-3zM208 451h3v1h-3zM211 450h9v1h-9zM220 449h9v1h-9zM229 448h2v1h-2zM231 447h3v1h-3zM234 446h2v1h-2zM236 445h5v1h-5zM241 444h6v1h-6zM247 443h7v1h-7zM254 442h6v1h-6zM260 441h7v1h-7zM267 440h8v1h-8zM275 439h5v1h-5z" fill="#ff0000"/>
<path d="M395 494h2v1h-2zM397 493h2v1h-2zM399 492h3v1h-3zM402 491h2v1h-2zM404 490h2v1h-2zM406 489h4v1h-4zM410 488h4v1h-4zM414 487h4v1h-4zM418 486h5v1h-5zM423 485h5v1h-5zM428 484h5v1h-5zM433 483h6v1h-6zM439 482h6v1h-6zM445 481h5v1h-5zM450 480h4v1h-4zM454 479h4v1h-4zM458 478h4v1h-4zM462 477h3v1h-3zM465 476h4v1h-4zM469 475h3v1h-3zM472 474h3v1h-3zM475 473h2v1h-2zM477 472h3v1h-3zM480 471h2v1h-2zM482 470h2v1h-2zM484 469h3v1h-3zM487 468h3v1h-3zM490 467h3v1h-3zM493 466h3v1h-3zM496 465h3v1h-3zM499 464h8v1h-8zM507 463h7v1h-7zM514 462h2v1h-2zM516 461h2v1h-2zM518 460h2v1h-2zM520 459h1v1h-1zM521 458h2v1h-2zM523 457h2v1h-2zM525 456h2v1h-2zM527 455h3v1h-3zM530 454h3v1h-3zM533 453h2v1h-2zM535 452h3v1h-3zM538 451h2v1h-2z" fill="#ff0000"/>
<path d="M394 494h2v1h-2zM396 493h2v1h-2zM398 492h3v1h-3zM401 491h2v1h-2zM403 490h2v1h-2zM405 489h4v1h-4zM409 488h4v1h-4zM413 487h4v1h-4zM417 486h5v1h-5zM422 485h5v1h-5zM427 484h5v1h-5zM432 483h6v1h-6zM438 482h6v1h-6zM444 481h5v1h-5zM449 480h4v1h-4zM453 479h4v1h-4zM457 478h4v1h-4zM461 477h3v1h-3zM464 476h4v1h-4zM468 475h3v1h-3zM471 474h3v1h-3zM474 473h2v1h-2zM476 472h3v1h-3zM479 471h2v1h-2zM481 470h2v1h-2zM483 469h3v1h-3zM486 468h3v1h-3zM489 467h3v1h-3zM492 466h3v1h-3zM495 465h3v1h-3zM498 464h8v1h-8zM506 463h7v1h-7zM513 462h2v1h-2zM515 461h2v1h-2zM517 460h2v1h-2zM519 459h1v1h-1zM520 458h2v1h-2zM522 457h2v1h-2zM524 456h2v1h-2zM526 455h3v1h-3zM529 454h3v1h-3zM532 453h2v1h-2zM534 452h3v1h-3zM537 451h2v1h-2z" fill="#ff0000"/>
<path d="M396 494h2v1h-2zM398 493h2v1h-2zM400 492h3v1h-3zM403 491h2v1h-2zM405 490h2v1h-2zM407 489h4v1h-4zM411 488h4v1h-4zM415 487h4v1h-4zM419 486h5v1h-5zM424 485h5v1h-5zM429 484h5v1h-5zM434 483h6v1h-6zM440 482h6v1h-6zM446 481h5v1h-5zM451 480h4v1h-4zM455 479h4v1h-4zM459 478h4v1h-4zM463 477h3v1h-3zM466 476h4v1h-4zM470 475h3v1h-3zM473 474h3v1h-3zM476 473h2v1h-2zM478 472h3v1h-3zM481 471h2v1h-2zM483 470h2v1h-2zM485 469h3v1h-3zM488 468h3v1h-3zM491 467h3v1h-3zM494 466h3v1h-3zM497 465h3v1h-3zM500 464h8v1h-8zM508 463h7v1h-7zM515 462h2v1h-2zM517 461h2v1h-2zM519 460h2v1h-2zM521 459h1v1h-1zM522 458h2v1h-2zM524 457h2v1h-2zM526 456h2v1h-2zM528 455h3v1h-3zM531 454h3v1h-3zM534 453h2v1h-2zM536 452h3v1h-3zM539 451h2v1h-2z" fill="#ff0000"/>
<path d="M395 493h2v1h-2zM397 492h2v1h-2zM399 491h3v1h-3zM402 490h2v1h-2zM404 489h2v1h-2zM406 488h4v1h-4zM410 487h4v1h-4zM414 486h4v1h-4zM418 485h5v1h-5zM423 484h5v1h-5zM428 483h5v1h-5zM433 482h6v1h-6zM439 481h6v1h-6zM445 480h5v1h-5zM450 479h4v1h-4zM454 478h4v1h-4zM458 477h4v1h-4zM462 476h3v1h-3zM465 475h4v1h-4zM469 474h3v1h-3zM472 473h3v1h-3zM475 472h2v1h-2zM477 471h3v1h-3zM480 470h2v1h-2zM482 469h2v1h-2zM484 468h3v1h-3zM487 467h3v1h-3zM490 466h3v1h-3zM493 465h3v1h-3zM496 464h3v1h-3zM499 463h8v1h-8zM507 462h7v1h-7zM514 461h2v1h-2zM516 460h2v1h-2zM518 459h2v1h-2zM520 458h1v1h-1zM521 457h2v1h-2zM523 456h2v1h-2zM525 455h2v1h-2zM527 454h3v1h-3zM530 453h3v1h-3zM533 452h2v1h-2zM535 451h3v1h-3zM538 450h2v1h-2z" fill="#ff0000"/>
<path d="M395 495h2v1h-2zM397 494h2v1h-2zM399 493h3v1h-3zM402 492h2v1h-2zM404 491h2v1h-2zM406 490h4v1h-4zM410 489h4v1h-4zM414 488h4v1h-4zM418 487h5v1h-5zM423 486h5v1h-5zM428 485h5v1h-5zM433 484h6v1h-6zM439 483h6v1h-6zM445 482h5v1h-5zM450 481h4v1h-4zM454 480h4v1h-4zM458 479h4v1h-4zM462 478h3v1h-3zM465 477h4v1h-4zM469 476h3v1h-3zM472 475h3v1h-3zM475 474h2v1h-2zM477 473h3v1h-3zM480 472h2v1h-2zM482 471h2v1h-2zM484 470h3v1h-3zM487 469h3v1h-3zM490 468h3v1h-3zM493 467h3v1h-3zM496 466h3v1h-3zM499 465h8v1h-8zM507 464h7v1h-7zM514 463h2v1h-2zM516 462h2v1h-2zM518 461h2v1h-2zM520 460h1v1h-1zM521 459h2v1h-2zM523 458h2v1h-2zM525 457h2v1h-2zM527 456h3v1h-3zM530 455h3v1h-3zM533 454h2v1h-2zM535 453h3v1h-3zM538 452h2v1h-2z" fill="#ff0000"/>
<path d="M669 478h1v1h-1zM670 477h1v1h-1zM671 476h1v1h-1zM672 475h1v1h-1zM673 474h1v1h-1zM674 473h1v1h-1zM675 472h1v1h-1zM676 471h1v1h-1zM677 470h1v1h-1zM678 469h1v1h-1zM679 468h1v1h-1zM680 467h1v1h-1zM681 466h1v1h-1zM682 465h1v1h-1zM683 464h1v1h-1zM684 463h1v1h-1zM685 462h1v1h-1zM686 461h1v1h-1zM687 460h1v1h-1zM688 459h1v1h-1zM689 458h1v1h-1zM690 457h1v1h-1zM691 456h1v1h-1zM692 455h1v1h-1zM693 454h1v1h-1zM694 452h1v2h-1zM695 451h1v1h-1zM696 450h1v1h-1zM697 448h1v2h-1zM698 447h1v1h-1zM699 446h1v1h-1zM700 444h1v2h-1zM701 443h1v1h-1zM702 442h1v1h-1zM703 440h1v2h-1zM704 439h1v1h-1zM705 438h1v1h-1zM706 436h1v2h-1zM707 434h1v2h-1zM708 432h1v2h-1zM709 430h1v2h-1zM710 429h1v1h-1zM711 427h1v2h-1zM712 425h1v2h-1zM713 423h1v2h-1zM714 421h1v2h-1zM715 420h1v1h-1zM716 418h1v2h-1zM717 416h1v2h-1zM718 415h1v1h-1zM719 413h1v2h-1zM720 411h1v2h-1zM721 409h1v2h-1zM722 408h1v1h-1zM723 406h1v2h-1zM724 404h1v2h-1zM725 403h1v1h-1zM726 401h1v2h-1zM727 400h1v1h-1zM728 398h1v2h-1zM729 397h1v1h-1zM730 396h1v1h-1zM731 394h1v2h-1zM732 393h1v1h-1zM733 391h1v2h-1zM734 390h1v1h-1zM735 389h1v1h-1zM736 388h1v1h-1zM737 386h1v2h-1zM738 385h1v1h-1zM739 384h1v1h-1zM740 383h1v1h-1z" fill="#ff0000"/>
<path d="M668 478h1v1h-1zM669 477h1v1h-1zM670 476h1v1h-1zM671 475h1v1h-1zM672 474h1v1h-1zM673 473h1v1h-1zM674 472h1v1h-1zM675 471h1v1h-1zM676 470h1v1h-1zM677 469h1v1h-1zM678 468h1v1h-1zM679 467h1v1h-1zM680 466h1v1h-1zM681 465h1v1h-1zM682 464h1v1h-1zM683 463h1v1h-1zM684 462h1v1h-1zM685 461h1v1h-1zM686 460h1v1h-1zM687 459h1v1h-1zM688 458h1v1h-1zM689 457h1v1h-1zM690 456h1v1h-1zM691 455h1v1h-1zM692 454h1v1h-1zM693 452h1v2h-1zM694 451h1v1h-1zM695 450h1v1h-1zM696 448h1v2h-1zM697 447h1v1h-1zM698 446h1v1h-1zM699 444h1v2h-1zM700 443h1v1h-1zM701 442h1v1h-1zM702 440h1v2h-1zM703 439h1v1h-1zM704 438h1v1h-1zM705 436h1v2h-1zM706 434h1v2h-1zM707 432h1v2h-1zM708 430h1v2h-1zM709 429h1v1h-1zM710 427h1v2h-1zM711 425h1v2h-1zM712 423h1v2h-1zM713 421h1v2h-1zM714 420h1v1h-1zM715 418h1v2h-1zM716 416h1v2h-1zM717 415h1v1h-1zM718 413h1v2h-1zM719 411h1v2h-1zM720 409h1v2h-1zM721 408h1v1h-1zM722 406h1v2h-1zM723 404h1v2h-1zM724 403h1v1h-1zM725 401h1v2h-1zM726 400h1v1h-1zM727 398h1v2h-1zM728 397h1v1h-1zM729 396h1v1h-1zM730 394h1v2h-1zM731 393h1v1h-1zM732 391h1v2h-1zM733 390h1v1h-1zM734 389h1v1h-1zM735 388h1v1h-1zM736 386h1v2h-1zM737 385h1v1h-1zM738 384h1v1h-1zM739 383h1v1h-1zM740 382h1v1h-1z" fill="#ff0000"/>
<path d="M670 478h1v1h-1zM671 477h1v1h-1zM672 476h1v1h-1zM673 475h1v1h-1zM674 474h1v1h-1zM675 473h1v1h-1zM676 472h1v1h-1zM677 471h1v1h-1zM678 470h1v1h-1zM679 469h1v1h-1zM680 468h1v1h-1zM681 467h1v1h-1zM682 466h1v1h-1zM683 465h1v1h-1zM684 464h1v1h-1zM685 463h1v1h-1zM686 462h1v1h-1zM687 461h1v1h-1zM688 460h1v1h-1zM689 459h1v1h-1zM690 458h1v1h-1zM691 457h1v1h-1zM692 456h1v1h-1zM693 455h1v1h-1zM694 454h1v1h-1zM695 452h1v2h-1zM696 451h1v1h-1zM697 450h1v1h-1zM698 448h1v2h-1zM699 447h1v1h-1zM700 446h1v1h-1zM701 444h1v2h-1zM702 443h1v1h-1zM703 442h1v1h-1zM704 440h1v2h-1zM705 439h1v1h-1zM706 438h1v1h-1zM707 436h1v2h-1zM708 434h1v2h-1zM709 432h1v2h-1zM710 430h1v2h-1zM711 429h1v1h-1zM712 427h1v2h-1zM713 425h1v2h-1zM714 423h1v2h-1zM715 421h1v2h-1zM716 420h1v1h-1zM717 418h1v2h-1zM718 416h1v2h-1zM719 415h1v1h-1zM720 413h1v2h-1zM721 411h1v2h-1zM722 409h1v2h-1zM723 408h1v1h-1zM724 406h1v2h-1zM725 404h1v2h-1zM726 403h1v1h-1zM727 401h1v2h-1zM728 400h1v1h-1zM729 398h1v2h-1zM730 397h1v1h-1zM731 396h1v1h-1zM732 394h1v2h-1zM733 393h1v1h-1zM734 391h1v2h-1zM735 390h1v1h-1zM736 389h1v1h-1zM737 388h1v1h-1zM738 386h1v2h-1zM739 385h1v1h-1zM740 384h1v1h-1z" fill="#ff0000"/>
<path d="M669 477h1v1h-1zM670 476h1v1h-1zM671 475h1v1h-1zM672 474h1v1h-1zM673 473h1v1h-1zM674 472h1v1h-1zM675 471h1v1h-1zM676 470h1v1h-1zM677 469h1v1h-1zM678 468h1v1h-1zM679 467h1v1h-1zM680 466h1v1h-1zM681 465h1v1h-1zM682 464h1v1h-1zM683 463h1v1h-1zM684 462h1v1h-1zM685 461h1v1h-1zM686 460h1v1h-1zM687 459h1v1h-1zM688 458h1v1h-1zM689 457h1v1h-1zM690 456h1v1h-1zM691 455h1v1h-1zM692 454h1v1h-1zM693 453h1v1h-1zM694 451h1v2h-1zM695 450h1v1h-1zM696 449h1v1h-1zM697 447h1v2h-1zM698 446h1v1h-1zM699 445h1v1h-1zM700 443h1v2h-1zM701 442h1v1h-1zM702 441h1v1h-1zM703 439h1v2h-1zM704 438h1v1h-1zM705 437h1v1h-1zM706 435h1v2h-1zM707 433h1v2h-1zM708 431h1v2h-1zM709 429h1v2h-1zM710 428h1v1h-1zM711 426h1v2h-1zM712 424h1v2h-1zM713 422h1v2h-1zM714 420h1v2h-1zM715 419h1v1h-1zM716 417h1v2h-1zM717 415h1v2h-1zM718 414h1v1h-1zM719 412h1v2h-1zM720 410h1v2h-1zM721 408h1v2h-1zM722 407h1v1h-1zM723 405h1v2h-1zM724 403h1v2h-1zM725 402h1v1h-1zM726 400h1v2h-1zM727 399h1v1h-1zM728 397h1v2h-1zM729 396h1v1h-1zM730 395h1v1h-1zM731 393h1v2h-1zM732 392h1v1h-1zM733 390h1v2h-1zM734 389h1v1h-1zM735 388h1v1h-1zM736 387h1v1h-1zM737 385h1v2h-1zM738 384h1v1h-1zM739 383h1v1h-1zM740 382h1v1h-1z" fill="#ff0000"/>
<path d="M669 479h1v1h-1zM670 478h1v1h-1zM671 477h1v1h-1zM672 476h1v1h-1zM673 475h1v1h-1zM674 474h1v1h-1zM675 473h1v1h-1zM676 472h1v1h-1zM677 471h1v1h-1zM678 470h1v1h-1zM679 469h1v1h-1zM680 468h1v1h-1zM681 467h1v1h-1zM682 466h1v1h-1zM683 465h1v1h-1zM684 464h1v1h-1zM685 463h1v1h-1zM686 462h1v1h-1zM687 461h1v1h-1zM688 460h1v1h-1zM689 459h1v1h-1zM690 458h1v1h-1zM691 457h1v1h-1zM692 456h1v1h-1zM693 455h1v1h-1zM694 453h1v2h-1zM695 452h1v1h-1zM696 451h1v1h-1zM697 449h1v2h-1zM698 448h1v1h-1zM699 447h1v1h-1zM700 445h1v2h-1zM701 444h1v1h-1zM702 443h1v1h-1zM703 441h1v2h-1zM704 440h1v1h-1zM705 439h1v1h-1zM706 437h1v2h-1zM707 435h1v2h-1zM708 433h1v2h-1zM709 431h1v2h-1zM710 430h1v1h-1zM711 428h1v2h-1zM712 426h1v2h-1zM713 424h1v2h-1zM714 422h1v2h-1zM715 421h1v1h-1zM716 419h1v2h-1zM717 417h1v2h-1zM718 416h1v1h-1zM719 414h1v2h-1zM720 412h1v2h-1zM721 410h1v2h-1zM722 409h1v1h-1zM723 407h1v2h-1zM724 405h1v2h-1zM725 404h1v1h-1zM726 402h1v2h-1zM727 401h1v1h-1zM728 399h1v2h-1zM729 398h1v1h-1zM730 397h1v1h-1zM731 395h1v2h-1zM732 394h1v1h-1zM733 392h1v2h-1zM734 391h1v1h-1zM735 390h1v1h-1zM736 389h1v1h-1zM737 387h1v2h-1zM738 386h1v1h-1zM739 385h1v1h-1zM740 384h1v1h-1z" fill="#ff0000"/>
<path d="M3 530h31v1h-31zM34 529h7v1h-7zM41 528h6v1h-6zM47 527h7v1h-7zM54 526h6v1h-6zM60 525h6v1h-6zM66 524h6v1h-6zM72 523h6v1h-6zM78 522h5v1h-5zM83 521h5v1h-5zM88 520h5v1h-5zM93 519h5v1h-5zM98 518h4v1h-4zM102 517h2v1h-2zM104 516h3v1h-3zM107 515h2v1h-2zM109 514h3v1h-3zM112 513h2v1h-2zM114 512h3v1h-3zM117 511h2v1h-2zM119 510h3v1h-3zM122 509h2v1h-2zM124 508h2v1h-2zM126 507h2v1h-2zM128 506h2v1h-2zM130 505h2v1h-2zM132 504h2v1h-2zM134 503h2v1h-2zM136 502h2v1h-2zM138 501h2v1h-2zM140 500h3v1h-3zM143 499h2v1h-2zM145 498h2v1h-2zM147 497h4v1h-4zM151 496h4v1h-4zM155 495h4v1h-4zM159 494h2v1h-2z" fill="#ff00ff"/>
<path d="M3 529h31v1h-31zM34 528h7v1h-7zM41 527h6v1h-6zM47 526h7v1h-7zM54 525h6v1h-6zM60 524h6v1h-6zM66 523h6v1h-6zM72 522h6v1h-6zM78 521h5v1h-5zM83 520h5v1h-5zM88 519h5v1h-5zM93 518h5v1h-5zM98 517h4v1h-4zM102 516h2v1h-2zM104 515h3v1h-3zM107 514h2v1h-2zM109 513h3v1h-3zM112 512h2v1h-2zM114 511h3v1h-3zM117 510h2v1h-2zM119 509h3v1h-3zM122 508h2v1h-2zM124 507h2v1h-2zM126 506h2v1h-2zM128 505h2v1h-2zM130 504h2v1h-2zM132 503h2v1h-2zM134 502h2v1h-2zM136 501h2v1h-2zM138 500h2v1h-2zM140 499h3v1h-3zM143 498h2v1h-2zM145 497h2v1h-2zM147 496h4v1h-4zM151 495h4v1h-4zM155 494h4v1h-4zM159 493h2v1h-2z" fill="#ff00ff"/>
<path d="M2 530h31v1h-31zM33 529h7v1h-7zM40 528h6v1h-6zM46 527h7v1h-7zM53 526h6v1h-6zM59 525h6v1h-6zM65 524h6v1h-6zM71 523h6v1h-6zM77 522h5v1h-5zM82 521h5v1h-5zM87 520h5v1h-5zM92 519h5v1h-5zM97 518h4v1h-4zM101 517h2v1h-2zM103 516h3v1h-3zM106 515h2v1h-2zM108 514h3v1h-3zM111 513h2v1h-2zM113 512h3v1h-3zM116 511h2v1h-2zM118 510h3v1h-3zM121 509h2v1h-2zM123 508h2v1h-2zM125 507h2v1h-2zM127 506h2v1h-2zM129 505h2v1h-2zM131 504h2v1h-2zM133 503h2v1h-2zM135 502h2v1h-2zM137 501h2v1h-2zM139 500h3v1h-3zM142 499h2v1h-2zM144 498h2v1h-2zM146 497h4v1h-4zM150 496h4v1h-4zM154 495h4v1h-4zM158 494h2v1h-2z" fill="#ff00ff"/>
<path d="M2 529h31v1h-31zM33 528h7v1h-7zM40 527h6v1h-6zM46 526h7v1h-7zM53 525h6v1h-6zM59 524h6v1h-6zM65 523h6v1h-6zM71 522h6v1h-6zM77 521h5v1h-5zM82 520h5v1h-5zM87 519h5v1h-5zM92 518h5v1h-5zM97 517h4v1h-4zM101 516h2v1h-2zM103 515h3v1h-3zM106 514h2v1h-2zM108 513h3v1h-3zM111 512h2v1h-2zM113 511h3v1h-3zM116 510h2v1h-2zM118 509h3v1h-3zM121 508h2v1h-2zM123 507h2v1h-2zM125 506h2v1h-2zM127 505h2v1h-2zM129 504h2v1h-2zM131 503h2v1h-2zM133 502h2v1h-2zM135 501h2v1h-2zM137 500h2v1h-2zM139 499h3v1h-3zM142 498h2v1h-2zM144 497h2v1h-2zM146 496h4v1h-4zM150 495h4v1h-4zM154 494h4v1h-4zM158 493h2v1h-2z" fill="#ff00ff"/>
<path d="M160 494h2v1h-2zM162 493h3v1h-3zM165 492h4v1h-4zM169 491h3v1h-3zM172 490h3v1h-3zM175 489h3v1h-3zM178 488h3v1h-3zM181 487h2v1h-2zM183 486h3v1h-3zM186 485h3v1h-3zM189 484h4v1h-4zM193 483h4v1h-4zM197 482h4v1h-4zM201 481h5v1h-5zM206 480h4v1h-4zM210 479h4v1h-4zM214 478h5v1h-5zM219 477h4v1h-4zM223 476h4v1h-4zM227 475h5v1h-5zM232 474h4v1h-4zM236 473h5v1h-5zM241 472h4v1h-4zM245 471h4v1h-4zM249 470h5v1h-5zM254 469h4v1h-4zM258 468h4v1h-4zM262 467h5v1h-5zM267 466h4v1h-4zM271 465h4v1h-4zM275 464h5v1h-5zM280 463h4v1h-4zM284 462h4v1h-4zM288 461h31v1h-31zM319 462h8v1h-8zM327 463h4v1h-4z" fill="#ff6000"/>
<path d="M160 493h2v1h-2zM162 492h3v1h-3zM165 491h4v1h-4zM169 490h3v1h-3zM172 489h3v1h-3zM175 488h3v1h-3zM178 487h3v1h-3zM181 486h2v1h-2zM183 485h3v1h-3zM186 484h3v1h-3zM189 483h4v1h-4zM193 482h4v1h-4zM197 481h4v1h-4zM201 480h5v1h-5zM206 479h4v1h-4zM210 478h4v1h-4zM214 477h5v1h-5zM219 476h4v1h-4zM223 475h4v1h-4zM227 474h5v1h-5zM232 473h4v1h-4zM236 472h5v1h-5zM241 471h4v1h-4zM245 470h4v1h-4zM249 469h5v1h-5zM254 468h4v1h-4zM258 467h4v1h-4zM262 466h5v1h-5zM267 465h4v1h-4zM271 464h4v1h-4zM275 463h5v1h-5zM280 462h4v1h-4zM284 461h4v1h-4zM288 460h31v1h-31zM319 461h8v1h-8zM327 462h4v1h-4z" fill="#ff6000"/>
<path d="M159 494h2v1h-2zM161 493h3v1h-3zM164 492h4v1h-4zM168 491h3v1h-3zM171 490h3v1h-3zM174 489h3v1h-3zM177 488h3v1h-3zM180 487h2v1h-2zM182 486h3v1h-3zM185 485h3v1h-3zM188 484h4v1h-4zM192 483h4v1h-4zM196 482h4v1h-4zM200 481h5v1h-5zM205 480h4v1h-4zM209 479h4v1h-4zM213 478h5v1h-5zM218 477h4v1h-4zM222 476h4v1h-4zM226 475h5v1h-5zM231 474h4v1h-4zM235 473h5v1h-5zM240 472h4v1h-4zM244 471h4v1h-4zM248 470h5v1h-5zM253 469h4v1h-4zM257 468h4v1h-4zM261 467h5v1h-5zM266 466h4v1h-4zM270 465h4v1h-4zM274 464h5v1h-5zM279 463h4v1h-4zM283 462h4v1h-4zM287 461h31v1h-31zM318 462h8v1h-8zM326 463h4v1h-4z" fill="#ff6000"/>
<path d="M159 493h2v1h-2zM161 492h3v1h-3zM164 491h4v1h-4zM168 490h3v1h-3zM171 489h3v1h-3zM174 488h3v1h-3zM177 487h3v1h-3zM180 486h2v1h-2zM182 485h3v1h-3zM185 484h3v1h-3zM188 483h4v1h-4zM192 482h4v1h-4zM196 481h4v1h-4zM200 480h5v1h-5zM205 479h4v1h-4zM209 478h4v1h-4zM213 477h5v1h-5zM218 476h4v1h-4zM222 475h4v1h-4zM226 474h5v1h-5zM231 473h4v1h-4zM235 472h5v1h-5zM240 471h4v1h-4zM244 470h4v1h-4zM248 469h5v1h-5zM253 468h4v1h-4zM257 467h4v1h-4zM261 466h5v1h-5zM266 465h4v1h-4zM270 464h4v1h-4zM274 463h5v1h-5zM279 462h4v1h-4zM283 461h4v1h-4zM287 460h31v1h-31zM318 461h8v1h-8zM326 462h4v1h-4z" fill="#ff6000"/>
<path d="M330 463h4v1h-4zM334 464h6v1h-6zM340 465h6v1h-6zM346 466h4v1h-4zM350 467h4v1h-4zM354 468h3v1h-3zM357 469h4v1h-4zM361 470h4v1h-4zM365 471h3v1h-3zM368 472h3v1h-3zM371 473h5v1h-5zM376 474h6v1h-6zM382 475h7v1h-7zM389 476h6v1h-6zM395 477h9v1h-9zM404 478h13v1h-13zM417 479h37v1h-37zM454 478h8v1h-8z" fill="#0000ff"/>
<path d="M330 462h4v1h-4zM334 463h6v1h-6zM340 464h6v1h-6zM346 465h4v1h-4zM350 466h4v1h-4zM354 467h3v1h-3zM357 468h4v1h-4zM361 469h4v1h-4zM365 470h3v1h-3zM368 471h3v1h-3zM371 472h5v1h-5zM376 473h6v1h-6zM382 474h7v1h-7zM389 475h6v1h-6zM395 476h9v1h-9zM404 477h13v1h-13zM417 478h37v1h-37zM454 477h8v1h-8z" fill="#0000ff"/>
<path d="M329 463h4v1h-4zM333 464h6v1h-6zM339 465h6v1h-6zM345 466h4v1h-4zM349 467h4v1h-4zM353 468h3v1h-3zM356 469h4v1h-4zM360 470h4v1h-4zM364 471h3v1h-3zM367 472h3v1h-3zM370 473h5v1h-5zM375 474h6v1h-6zM381 475h7v1h-7zM388 476h6v1h-6zM394 477h9v1h-9zM403 478h13v1h-13zM416 479h37v1h-37zM453 478h8v1h-8z" fill="#0000ff"/>
<path d="M329 462h4v1h-4zM333 463h6v1h-6zM339 464h6v1h-6zM345 465h4v1h-4zM349 466h4v1h-4zM353 467h3v1h-3zM356 468h4v1h-4zM360 469h4v1h-4zM364 470h3v1h-3zM367 471h3v1h-3zM370 472h5v1h-5zM375 473h6v1h-6zM381 474h7v1h-7zM388 475h6v1h-6zM394 476h9v1h-9zM403 477h13v1h-13zM416 478h37v1h-37zM453 477h8v1h-8z" fill="#0000ff"/>
<path d="M461 478h7v1h-7zM468 477h12v1h-12zM480 476h9v1h-9zM489 475h8v1h-8zM497 474h10v1h-10zM507 473h10v1h-10zM517 472h6v1h-6zM523 471h6v1h-6zM529 470h6v1h-6zM535 469h12v1h-12zM547 468h45v1h-45z" fill="#ff6000"/>
<path d="M461 477h7v1h-7zM468 476h12v1h-12zM480 475h9v1h-9zM489 474h8v1h-8zM497 473h10v1h-10zM507 472h10v1h-10zM517 471h6v1h-6zM523 470h6v1h-6zM529 469h6v1h-6zM535 468h12v1h-12zM547 467h45v1h-45z" fill="#ff6000"/>
<path d="M460 478h7v1h-7zM467 477h12v1h-12zM479 476h9v1h-9zM488 475h8v1h-8zM496 474h10v1h-10zM506 473h10v1h-10zM516 472h6v1h-6zM522 471h6v1h-6zM528 470h6v1h-6zM534 469h12v1h-12zM546 468h45v1h-45z" fill="#ff6000"/>
<path d="M460 477h7v1h-7zM467 476h12v1h-12zM479 475h9v1h-9zM488 474h8v1h-8zM496 473h10v1h-10zM506 472h10v1h-10zM516 471h6v1h-6zM522 470h6v1h-6zM528 469h6v1h-6zM534 468h12v1h-12zM546 467h45v1h-45z" fill="#ff6000"/>
<path d="M591 468h4v1h-4zM595 469h7v1h-7zM602 470h7v1h-7zM609 471h6v1h-6zM615 472h6v1h-6zM621 473h6v1h-6zM627 474h10v1h-10zM637 475h38v1h-38zM675 474h8v1h-8z" fill="#0000ff"/>
<path d="M591 467h4v1h-4zM595 468h7v1h-7zM602 469h7v1h-7zM609 470h6v1h-6zM615 471h6v1h-6zM621 472h6v1h-6zM627 473h10v1h-10zM637 474h38v1h-38zM675 473h8v1h-8z" fill="#0000ff"/>
<path d="M590 468h4v1h-4zM594 469h7v1h-7zM601 470h7v1h-7zM608 471h6v1h-6zM614 472h6v1h-6zM620 473h6v1h-6zM626 474h10v1h-10zM636 475h38v1h-38zM674 474h8v1h-8z" fill="#0000ff"/>
<path d="M590 467h4v1h-4zM594 468h7v1h-7zM601 469h7v1h-7zM608 470h6v1h-6zM614 471h6v1h-6zM620 472h6v1h-6zM626 473h10v1h-10zM636 474h38v1h-38zM674 473h8v1h-8z" fill="#0000ff"/>
<path d="M682 474h3v1h-3zM685 473h6v1h-6zM691 472h4v1h-4zM695 471h2v1h-2zM697 470h3v1h-3zM700 469h2v1h-2zM702 468h2v1h-2zM704 467h3v1h-3zM707 466h2v1h-2zM709 465h2v1h-2zM711 464h2v1h-2zM713 463h2v1h-2zM715 462h2v1h-2zM717 461h2v1h-2zM719 460h2v1h-2zM721 459h1v1h-1zM722 458h2v1h-2zM724 457h1v1h-1zM725 456h2v1h-2zM727 455h1v1h-1zM728 454h2v1h-2zM730 453h1v1h-1zM731 452h2v1h-2zM733 451h1v1h-1zM734 450h2v1h-2zM736 449h2v1h-2zM738 448h1v1h-1zM739 447h2v1h-2z" fill="#ff6000"/>
<path d="M682 473h3v1h-3zM685 472h6v1h-6zM691 471h4v1h-4zM695 470h2v1h-2zM697 469h3v1h-3zM700 468h2v1h-2zM702 467h2v1h-2zM704 466h3v1h-3zM707 465h2v1h-2zM709 464h2v1h-2zM711 463h2v1h-2zM713 462h2v1h-2zM715 461h2v1h-2zM717 460h2v1h-2zM719 459h2v1h-2zM721 458h1v1h-1zM722 457h2v1h-2zM724 456h1v1h-1zM725 455h2v1h-2zM727 454h1v1h-1zM728 453h2v1h-2zM730 452h1v1h-1zM731 451h2v1h-2zM733 450h1v1h-1zM734 449h2v1h-2zM736 448h2v1h-2zM738 447h1v1h-1zM739 446h2v1h-2z" fill="#ff6000"/>
<path d="M681 474h3v1h-3zM684 473h6v1h-6zM690 472h4v1h-4zM694 471h2v1h-2zM696 470h3v1h-3zM699 469h2v1h-2zM701 468h2v1h-2zM703 467h3v1h-3zM706 466h2v1h-2zM708 465h2v1h-2zM710 464h2v1h-2zM712 463h2v1h-2zM714 462h2v1h-2zM716 461h2v1h-2zM718 460h2v1h-2zM720 459h1v1h-1zM721 458h2v1h-2zM723 457h1v1h-1zM724 456h2v1h-2zM726 455h1v1h-1zM727 454h2v1h-2zM729 453h1v1h-1zM730 452h2v1h-2zM732 451h1v1h-1zM733 450h2v1h-2zM735 449h2v1h-2zM737 448h1v1h-1zM738 447h2v1h-2zM740 446h1v1h-1z" fill="#ff6000"/>
<path d="M681 473h3v1h-3zM684 472h6v1h-6zM690 471h4v1h-4zM694 470h2v1h-2zM696 469h3v1h-3zM699 468h2v1h-2zM701 467h2v1h-2zM703 466h3v1h-3zM706 465h2v1h-2zM708 464h2v1h-2zM710 463h2v1h-2zM712 462h2v1h-2zM714 461h2v1h-2zM716 460h2v1h-2zM718 459h2v1h-2zM720 458h1v1h-1zM721 457h2v1h-2zM723 456h1v1h-1zM724 455h2v1h-2zM726 454h1v1h-1zM727 453h2v1h-2zM729 452h1v1h-1zM730 451h2v1h-2zM732 450h1v1h-1zM733 449h2v1h-2zM735 448h2v1h-2zM737 447h1v1h-1zM738 446h2v1h-2zM740 445h1v1h-1z" fill="#ff6000"/>
<rect x="160" y="493" width="1" height="2" fill="#00e600"/>
<rect x="173" y="489" width="1" height="2" fill="#00e600"/>
<rect x="186" y="484" width="1" height="2" fill="#00e600"/>
<rect x="199" y="481" width="1" height="2" fill="#00e600"/>
<rect x="212" y="478" width="1" height="2" fill="#00e600"/>
<rect x="225" y="475" width="1" height="2" fill="#00e600"/>
<rect x="238" y="472" width="1" height="2" fill="#00e600"/>
<rect x="251" y="469" width="1" height="2" fill="#00e600"/>
<rect x="264" y="466" width="1" height="2" fill="#00e600"/>
<rect x="277" y="463" width="1" height="2" fill="#00e600"/>
<rect x="290" y="460" width="1" height="2" fill="#00e600"/>
<rect x="303" y="460" width="1" height="2" fill="#00e600"/>
<rect x="316" y="460" width="1" height="2" fill="#00e600"/>
<rect x="329" y="462" width="1" height="2" fill="#00e600"/>
<rect x="342" y="464" width="1" height="2" fill="#00e600"/>
<rect x="355" y="467" width="1" height="2" fill="#00e600"/>
<rect x="368" y="471" width="1" height="2" fill="#00e600"/>
<rect x="381" y="473" width="1" height="2" fill="#00e600"/>
<rect x="394" y="475" width="1" height="2" fill="#00e600"/>
<rect x="408" y="477" width="1" height="2" fill="#00e600"/>
<rect x="421" y="477" width="1" height="2" fill="#00e600"/>
<rect x="434" y="478" width="1" height="2" fill="#00e600"/>
<rect x="447" y="478" width="1" height="2" fill="#00e600"/>
<rect x="460" y="477" width="1" height="2" fill="#00e600"/>
<rect x="473" y="476" width="1" height="2" fill="#00e600"/>
<rect x="486" y="475" width="1" height="2" fill="#00e600"/>
<rect x="499" y="473" width="1" height="2" fill="#00e600"/>
<rect x="512" y="472" width="1" height="2" fill="#00e600"/>
<rect x="525" y="470" width="1" height="2" fill="#00e600"/>
<rect x="538" y="468" width="1" height="2" fill="#00e600"/>
<rect x="551" y="467" width="1" height="2" fill="#00e600"/>
<rect x="564" y="467" width="1" height="2" fill="#00e600"/>
<rect x="577" y="467" width="1" height="2" fill="#00e600"/>
<rect x="590" y="467" width="1" height="2" fill="#00e600"/>
<rect x="603" y="469" width="1" height="2" fill="#00e600"/>
<rect x="616" y="471" width="1" height="2" fill="#00e600"/>
<rect x="629" y="473" width="1" height="2" fill="#00e600"/>
<rect x="642" y="474" width="1" height="2" fill="#00e600"/>
<rect x="655" y="474" width="1" height="2" fill="#00e600"/>
<rect x="668" y="474" width="1" height="2" fill="#00e600"/>
<rect x="681" y="473" width="1" height="2" fill="#00e600"/>
<rect x="694" y="470" width="1" height="2" fill="#00e600"/>
<rect x="707" y="465" width="1" height="2" fill="#00e600"/>
<rect x="720" y="458" width="1" height="2" fill="#00e600"/>
<rect x="733" y="450" width="1" height="2" fill="#00e600"/>
<rect x="4" y="497" width="737" height="1" fill="#03030b"/>
<line x1="4" y1="497.5" x2="741" y2="497.5" stroke="#ff0000" stroke-width="1" stroke-dasharray="3 3"/>
</g>
<circle cx="96.0" cy="12.0" r="6" fill="#8a8a8a"/>
<polyline points="93.1,10.9 96.0,13.7 98.9,10.9" fill="none" stroke="#0c0c14" stroke-width="1.05" stroke-linecap="round" stroke-linejoin="round"/>
<circle cx="7.0" cy="342.5" r="6" fill="#8a8a8a"/>
<polyline points="4.1,341.4 7.0,344.2 9.9,341.4" fill="none" stroke="#0c0c14" stroke-width="1.05" stroke-linecap="round" stroke-linejoin="round"/>
<g transform="translate(390,502)"><path d="M3.9,1.0 C3.9,0.2 6.1,0.2 6.1,1.0 L6.1,6.0 C7.0,5.3 8.2,5.5 8.6,6.3 C9.4,5.7 10.6,6.1 10.8,7.0 C11.8,6.7 12.8,7.3 12.8,8.3 L12.8,11.2 C12.8,13.6 11.3,14.8 9.2,14.8 L6.6,14.8 C5.2,14.8 4.2,14.0 3.2,12.6 L0.7,8.9 C0.2,8.0 1.4,7.2 2.2,8.0 L3.9,9.8 Z" fill="#f5c468" stroke="#c47a20" stroke-width="0.9" stroke-linejoin="round"/><path d="M1.3,8.5 L4.0,11.6 M4.1,10.6 L4.1,1.3" fill="none" stroke="#fff6e0" stroke-width="0.9"/></g>
<rect x="584" y="320" width="13" height="13" fill="#0a3c80" shape-rendering="crispEdges"/>
<text x="584.6" y="330.6" fill="#ffffff" stroke="#ffffff" stroke-width="0.25" style="font-size:12px">财</text>
<text class="cj" y="16.2" fill="#c4c4c4"><tspan x="2">荣安地产</tspan><tspan x="52.3" style="font-size:11px">(</tspan><tspan x="56">日线</tspan><tspan x="80.8" style="font-size:11px">)</tspan></text>
<text x="106.6" y="16.0" fill="#ffffff" textLength="56.6" lengthAdjust="spacingAndGlyphs">MA5: 2.15</text>
<text x="169.9" y="16.0" fill="#ffff00" textLength="63.6" lengthAdjust="spacingAndGlyphs">MA10: 2.11</text>
<text x="239.6" y="16.0" fill="#ff00ff" textLength="63.5" lengthAdjust="spacingAndGlyphs">MA20: 2.07</text>
<text x="309.4" y="16.0" fill="#00e600" textLength="64.0" lengthAdjust="spacingAndGlyphs">MA60: 2.02</text>
<text x="379.2" y="16.0" fill="#c0c0c0" textLength="71.4" lengthAdjust="spacingAndGlyphs">MA120: 1.94</text>
<text x="455.8" y="16.0" fill="#0000ff" textLength="71.0" lengthAdjust="spacingAndGlyphs">MA250: 2.07</text>
<text x="17.0" y="347.2" fill="#c4c4c4" class="cj">支撑点反弹副</text>
<text y="347.0" fill="#989898"><tspan class="cj" x="94.3">中线</tspan><tspan x="118.9" textLength="29.8" lengthAdjust="spacingAndGlyphs">: 0.00</tspan></text>
<text x="153.8" y="347.0" fill="#d8a0f0" textLength="69.0" lengthAdjust="spacingAndGlyphs">VAR31: 2.29</text>
<text x="228.4" y="347.0" fill="#00e0e0" textLength="67.9" lengthAdjust="spacingAndGlyphs">VAR32: 2.27</text>
<text x="302.7" y="347.0" fill="#c0c0c0" textLength="67.9" lengthAdjust="spacingAndGlyphs">VAR33: 2.28</text>
<text x="376.6" y="347.0" fill="#0000ff" textLength="67.0" lengthAdjust="spacingAndGlyphs">VAR34: 2.18</text>
<text x="451.0" y="347.0" fill="#1c1c20" textLength="30.2" lengthAdjust="spacingAndGlyphs">: 2.28</text>
<text x="485.8" y="347.0" fill="#ff00ff" textLength="31.1" lengthAdjust="spacingAndGlyphs">: 2.18</text>
<text y="347.0" fill="#ff5a14"><tspan class="cj" x="522">零上强</tspan><tspan x="558.5" textLength="31" lengthAdjust="spacingAndGlyphs">: 2.18</tspan></text>
<text x="594.9" y="347.0" fill="#00e600" textLength="68.0" lengthAdjust="spacingAndGlyphs">VAR35: 2.18</text>
<text x="668.4" y="347.0" fill="#ff0000" textLength="69.0" lengthAdjust="spacingAndGlyphs">VAR36: 0.00</text>
<g shape-rendering="crispEdges"><rect x="17" y="316" width="12" height="1" fill="#b0b0b0"/></g>
<polyline points="20.5,313.5 17.5,316.5 20.5,319.5" fill="none" stroke="#b0b0b0" stroke-width="1"/>
<text x="31.0" y="321.0" fill="#b8b8b8" textLength="22.6" lengthAdjust="spacingAndGlyphs">1.79</text>
</svg></body></html>
